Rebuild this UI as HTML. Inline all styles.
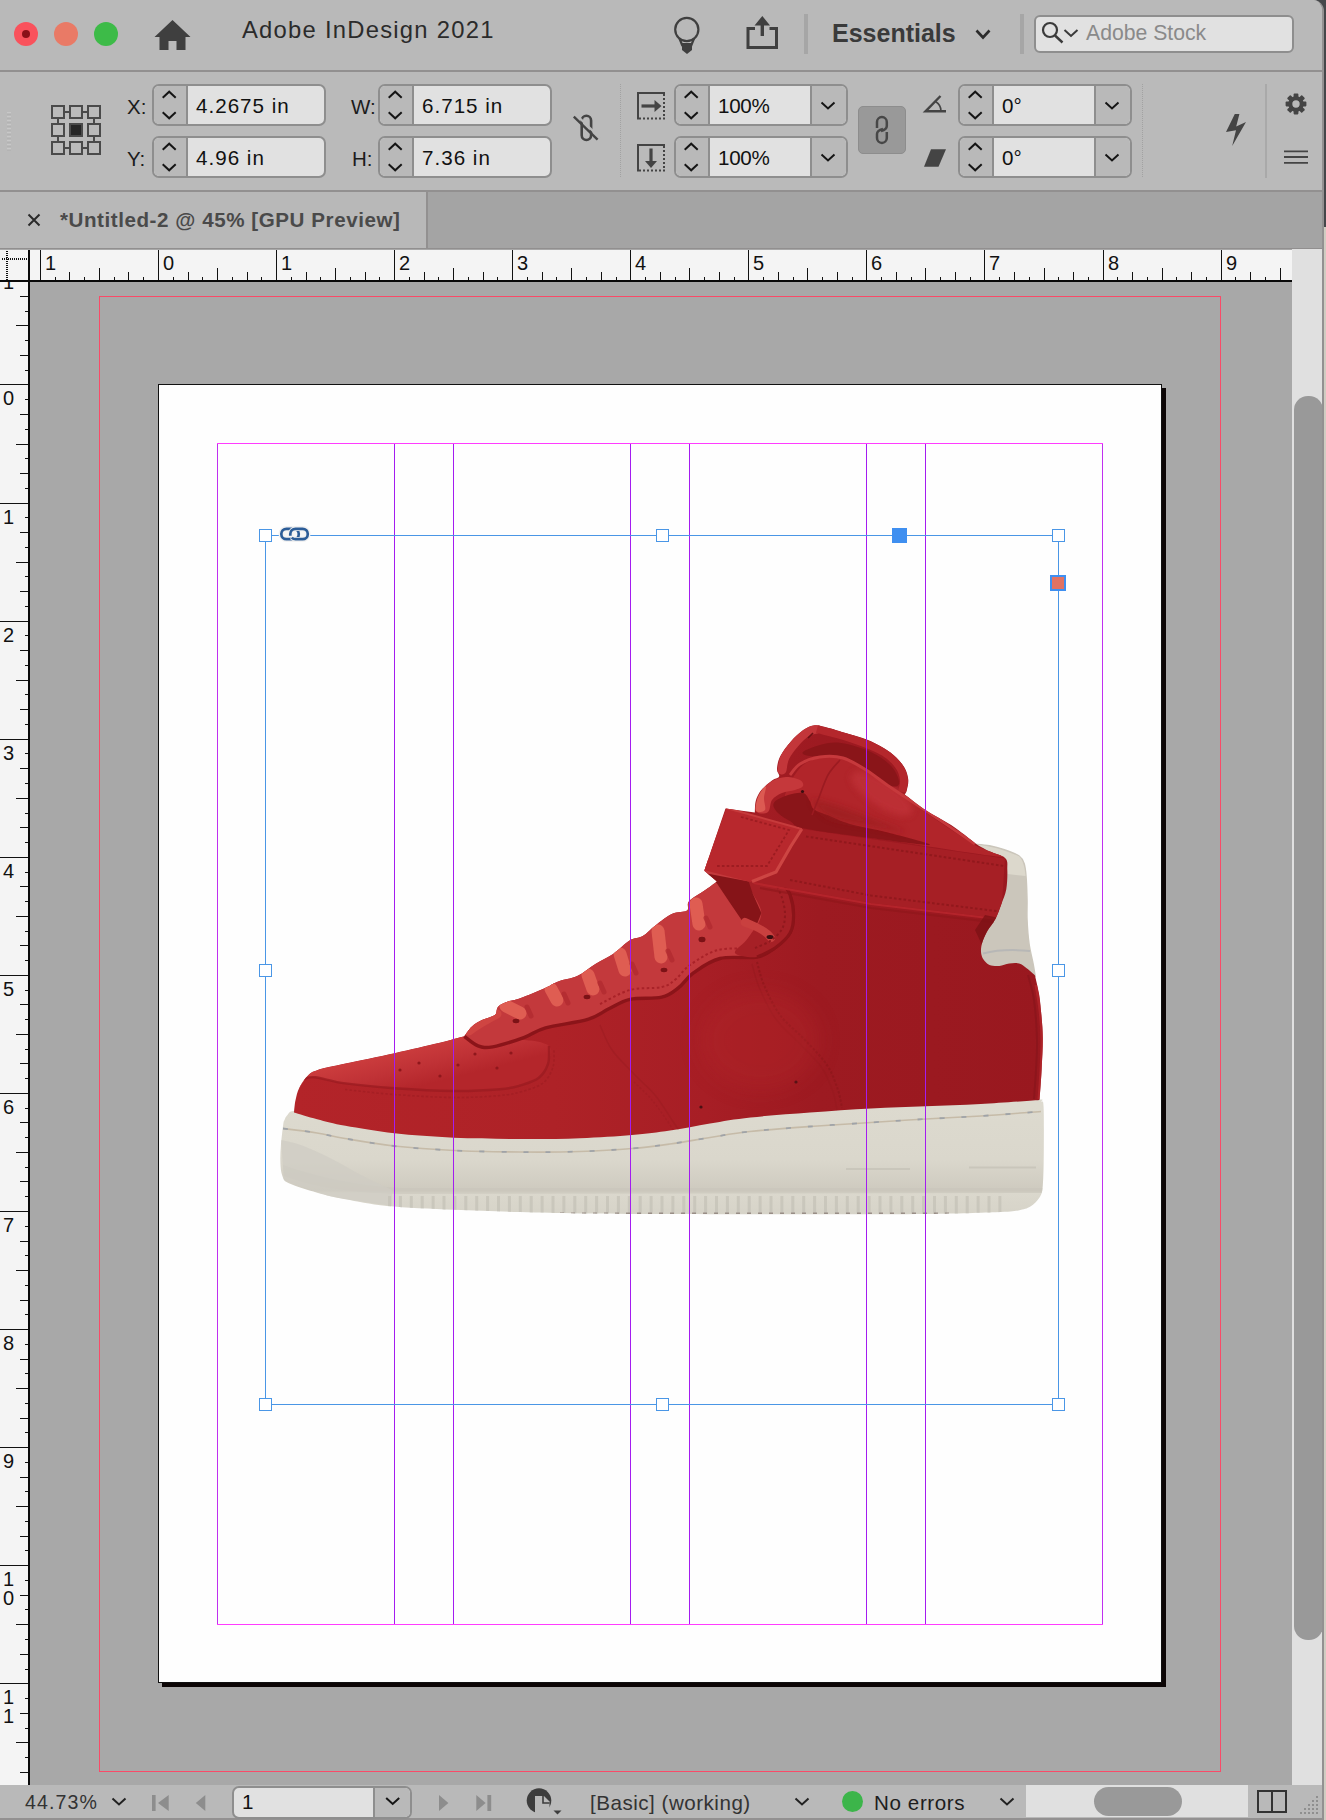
<!DOCTYPE html><html><head><meta charset="utf-8"><title>InDesign</title><style>
*{margin:0;padding:0;box-sizing:border-box}
html,body{width:1326px;height:1820px;overflow:hidden;background:#d0cdc2}
body{font-family:"Liberation Sans",sans-serif;color:#111;position:relative}
.abs{position:absolute}
#win{position:absolute;left:0;top:0;width:1324px;height:1820px;background:#bbbbbb;overflow:hidden;border-top-right-radius:11px;border-right:2px solid #939191}
#title{position:absolute;left:0;top:0;width:1323px;height:70px;background:#b9b9b9}
#ctrl{position:absolute;left:0;top:72px;width:1323px;height:118px;background:#bababa}
.hline{position:absolute;left:0;width:1323px;height:2px;background:#929090}
#tabs{position:absolute;left:0;top:192px;width:1323px;height:58px;background:#a4a4a4}
#tab1{position:absolute;left:0;top:0;width:428px;height:56px;background:#b8b8b8;border-right:2px solid #929090}
.t{position:absolute;white-space:nowrap;line-height:1}
.fld{position:absolute;height:42px;border:2px solid #8e8e8e;border-radius:7px;background:#e1e1e1;overflow:hidden}
.fld .sp{position:absolute;left:0;top:0;width:34px;height:100%;background:#b9b9b9;border-right:2px solid #8e8e8e}
.fld .dd{position:absolute;right:0;top:0;width:36px;height:100%;background:#b9b9b9;border-left:2px solid #8e8e8e}
.fld .v{position:absolute;top:10px;font-size:20.6px;color:#111;white-space:nowrap;line-height:1}
.lbl{position:absolute;font-size:20.5px;color:#1c1c1c;line-height:1;white-space:nowrap}
svg{position:absolute;overflow:visible}
</style></head><body>
<div class="abs" style="left:1300px;top:0;width:26px;height:227px;background:#45474a"></div>
<div id="win">
<div id="title">
<div class="abs" style="left:14px;top:22px;width:24px;height:24px;border-radius:50%;background:#f9525c"></div>
<div class="abs" style="left:22px;top:30px;width:8px;height:8px;border-radius:50%;background:#8a1018"></div>
<div class="abs" style="left:54px;top:22px;width:24px;height:24px;border-radius:50%;background:#e97a66"></div>
<div class="abs" style="left:94px;top:22px;width:24px;height:24px;border-radius:50%;background:#3dbb48"></div>
<svg style="left:154px;top:19px" width="38" height="32" viewBox="0 0 38 32"><path d="M18.5 1 L36.5 18 L31.5 18 L31.5 31 L22.5 31 L22.5 22 L14.5 22 L14.5 31 L5.5 31 L5.5 18 L0.5 18 Z" fill="#3f3f3f"/></svg>
<div class="t" id="apptitle" style="left:242px;top:18px;font-size:23.8px;letter-spacing:1.25px;color:#2b2b2b">Adobe InDesign 2021</div>
<svg style="left:670px;top:14px" width="34" height="42" viewBox="670 14 34 42"><circle cx="686.8" cy="29.5" r="11.6" fill="none" stroke="#3f3f3f" stroke-width="2.2"/><path d="M679.5 38.5 L682.5 46 M694 38.5 L691 46" stroke="#3f3f3f" stroke-width="2.2" fill="none"/><path d="M682 43 L692 43 L692 50 L687 54 L682 50 Z" fill="#3f3f3f"/></svg>
<svg style="left:744px;top:14px" width="38" height="38" viewBox="744 14 38 38"><path d="M755 28.5 L748 28.5 L748 47.5 L776.5 47.5 L776.5 28.5 L769.5 28.5" fill="none" stroke="#3f3f3f" stroke-width="3"/><path d="M762.3 36 L762.3 22" stroke="#3f3f3f" stroke-width="3.4" fill="none"/><path d="M754.5 25.5 L762.3 16 L770 25.5 Z" fill="#3f3f3f"/></svg>
<div class="abs" style="left:804px;top:14px;width:4px;height:40px;background:#a6a6a6"></div>
<div class="t" id="ess" style="left:832px;top:21px;font-size:25px;font-weight:bold;color:#3a3a3a">Essentials</div>
<svg style="left:974px;top:28px" width="18" height="12" viewBox="974 28 18 12"><path d="M976.5 30.5 L983 37.5 L989.5 30.5" fill="none" stroke="#2b2b2b" stroke-width="2.6"/></svg>
<div class="abs" style="left:1020px;top:14px;width:4px;height:40px;background:#a6a6a6"></div>
<div class="abs" style="left:1034px;top:14.5px;width:260px;height:38.5px;border:2px solid #8e8e8e;border-radius:6px;background:#e1e1e1"></div>
<svg style="left:1040px;top:20px" width="40" height="26" viewBox="1040 20 40 26"><circle cx="1050" cy="30" r="7" fill="none" stroke="#3a3a3a" stroke-width="2.2"/><path d="M1055 35.5 L1062.5 42.5" stroke="#3a3a3a" stroke-width="2.4" fill="none"/><path d="M1064.5 30 L1071 36 L1077.5 30" fill="none" stroke="#3a3a3a" stroke-width="2"/></svg>
<div class="t" id="stock" style="left:1086px;top:22px;font-size:21.2px;color:#8a8a8a">Adobe Stock</div>
</div>
<div class="hline" style="top:70px"></div>
<div id="ctrl"></div>
<svg style="left:0;top:0" width="20" height="200" viewBox="0 0 20 200"><rect x="7" y="112" width="4" height="1.6" fill="#c8c8c8"/><rect x="7" y="113.6" width="4" height="1" fill="#aeaeae"/><rect x="7" y="116" width="4" height="1.6" fill="#c8c8c8"/><rect x="7" y="117.6" width="4" height="1" fill="#aeaeae"/><rect x="7" y="120" width="4" height="1.6" fill="#c8c8c8"/><rect x="7" y="121.6" width="4" height="1" fill="#aeaeae"/><rect x="7" y="124" width="4" height="1.6" fill="#c8c8c8"/><rect x="7" y="125.6" width="4" height="1" fill="#aeaeae"/><rect x="7" y="128" width="4" height="1.6" fill="#c8c8c8"/><rect x="7" y="129.6" width="4" height="1" fill="#aeaeae"/><rect x="7" y="132" width="4" height="1.6" fill="#c8c8c8"/><rect x="7" y="133.6" width="4" height="1" fill="#aeaeae"/><rect x="7" y="136" width="4" height="1.6" fill="#c8c8c8"/><rect x="7" y="137.6" width="4" height="1" fill="#aeaeae"/><rect x="7" y="140" width="4" height="1.6" fill="#c8c8c8"/><rect x="7" y="141.6" width="4" height="1" fill="#aeaeae"/><rect x="7" y="144" width="4" height="1.6" fill="#c8c8c8"/><rect x="7" y="145.6" width="4" height="1" fill="#aeaeae"/><rect x="7" y="148" width="4" height="1.6" fill="#c8c8c8"/><rect x="7" y="149.6" width="4" height="1" fill="#aeaeae"/></svg>
<svg style="left:0;top:0" width="120" height="200" viewBox="0 0 120 200"><rect x="52" y="106" width="12" height="12" fill="none" stroke="#4a4a4a" stroke-width="2"/><rect x="70" y="106" width="12" height="12" fill="none" stroke="#4a4a4a" stroke-width="2"/><rect x="88" y="106" width="12" height="12" fill="none" stroke="#4a4a4a" stroke-width="2"/><rect x="52" y="124" width="12" height="12" fill="none" stroke="#4a4a4a" stroke-width="2"/><rect x="70" y="124" width="12" height="12" fill="#262626" stroke="#4a4a4a" stroke-width="2"/><rect x="88" y="124" width="12" height="12" fill="none" stroke="#4a4a4a" stroke-width="2"/><rect x="52" y="142" width="12" height="12" fill="none" stroke="#4a4a4a" stroke-width="2"/><rect x="70" y="142" width="12" height="12" fill="none" stroke="#4a4a4a" stroke-width="2"/><rect x="88" y="142" width="12" height="12" fill="none" stroke="#4a4a4a" stroke-width="2"/><path d="M65 112 L69 112" stroke="#4a4a4a" stroke-width="2"/><path d="M83 112 L87 112" stroke="#4a4a4a" stroke-width="2"/><path d="M65 148 L69 148" stroke="#4a4a4a" stroke-width="2"/><path d="M83 148 L87 148" stroke="#4a4a4a" stroke-width="2"/><path d="M58 119 L58 123" stroke="#4a4a4a" stroke-width="2"/><path d="M58 137 L58 141" stroke="#4a4a4a" stroke-width="2"/><path d="M94 119 L94 123" stroke="#4a4a4a" stroke-width="2"/><path d="M94 137 L94 141" stroke="#4a4a4a" stroke-width="2"/></svg>
<div class="lbl" id="lx" style="left:127px;top:97px">X:</div>
<div class="lbl" style="left:127px;top:149px">Y:</div>
<div class="fld" style="left:152px;top:84px;width:174px"><div class="sp"></div><svg style="left:0;top:0" width="34" height="38" viewBox="0 0 34 38"><path d="M8.7 11.7 l6.5 -6 l6.5 6" fill="none" stroke="#151515" stroke-width="2"/><path d="M8.7 26.3 l6.5 6 l6.5 -6" fill="none" stroke="#151515" stroke-width="2"/></svg><div class="v" id="vx" style="left:42px;letter-spacing:1px">4.2675 in</div></div>
<div class="fld" style="left:152px;top:136px;width:174px"><div class="sp"></div><svg style="left:0;top:0" width="34" height="38" viewBox="0 0 34 38"><path d="M8.7 11.7 l6.5 -6 l6.5 6" fill="none" stroke="#151515" stroke-width="2"/><path d="M8.7 26.3 l6.5 6 l6.5 -6" fill="none" stroke="#151515" stroke-width="2"/></svg><div class="v"  style="left:42px;letter-spacing:1px">4.96 in</div></div>
<div class="lbl" style="left:351px;top:97px">W:</div>
<div class="lbl" style="left:352px;top:149px">H:</div>
<div class="fld" style="left:378px;top:84px;width:174px"><div class="sp"></div><svg style="left:0;top:0" width="34" height="38" viewBox="0 0 34 38"><path d="M8.7 11.7 l6.5 -6 l6.5 6" fill="none" stroke="#151515" stroke-width="2"/><path d="M8.7 26.3 l6.5 6 l6.5 -6" fill="none" stroke="#151515" stroke-width="2"/></svg><div class="v" id="vw" style="left:42px;letter-spacing:1px">6.715 in</div></div>
<div class="fld" style="left:378px;top:136px;width:174px"><div class="sp"></div><svg style="left:0;top:0" width="34" height="38" viewBox="0 0 34 38"><path d="M8.7 11.7 l6.5 -6 l6.5 6" fill="none" stroke="#151515" stroke-width="2"/><path d="M8.7 26.3 l6.5 6 l6.5 -6" fill="none" stroke="#151515" stroke-width="2"/></svg><div class="v"  style="left:42px;letter-spacing:1px">7.36 in</div></div>
<svg style="left:568px;top:108px" width="36" height="40" viewBox="568 108 36 40"><path d="M581.7 120.4 A4.7 4.7 0 0 1 591.1 120.4 L591.1 135.3 A4.7 4.7 0 0 1 581.7 135.3 Z" fill="none" stroke="#444" stroke-width="2.6"/><path d="M575.9 114.5 L599.7 137.5" stroke="#bababa" stroke-width="2.4"/><path d="M573.8 116.7 L597.6 139.7" stroke="#444" stroke-width="2.4"/></svg>
<div class="abs" style="left:620px;top:84px;width:1px;height:94px;background:repeating-linear-gradient(#a2a2a2 0 1px,transparent 1px 2px)"></div>
<svg style="left:630px;top:86px" width="42" height="92" viewBox="630 86 42 92"><path d="M638 119.5 L638 93 L665 93" fill="none" stroke="#444" stroke-width="2"/><path d="M639 118.5 L665 118.5" stroke="#444" stroke-width="2" stroke-dasharray="2 2"/><path d="M664 94 L664 118" stroke="#444" stroke-width="2" stroke-dasharray="2 2"/><path d="M641.5 106 L656 106" stroke="#444" stroke-width="3.2"/><path d="M654.5 100 L661.5 106 L654.5 112 Z" fill="#444"/><path d="M638 171.5 L638 145 L665 145" fill="none" stroke="#444" stroke-width="2"/><path d="M639 170.5 L665 170.5" stroke="#444" stroke-width="2" stroke-dasharray="2 2"/><path d="M664 146 L664 170" stroke="#444" stroke-width="2" stroke-dasharray="2 2"/><path d="M651 148.5 L651 162" stroke="#444" stroke-width="3.2"/><path d="M645 161 L651 168 L657 161 Z" fill="#444"/></svg>
<div class="fld" style="left:674px;top:84px;width:174px"><div class="sp"></div><svg style="left:0;top:0" width="34" height="38" viewBox="0 0 34 38"><path d="M8.7 11.7 l6.5 -6 l6.5 6" fill="none" stroke="#151515" stroke-width="2"/><path d="M8.7 26.3 l6.5 6 l6.5 -6" fill="none" stroke="#151515" stroke-width="2"/></svg><div class="dd"></div><svg style="right:0;top:0" width="38" height="38" viewBox="0 0 38 38"><path d="M13.5 16.5 l6.5 6 l6.5 -6" fill="none" stroke="#151515" stroke-width="2"/></svg><div class="v" id="vs" style="left:42px;letter-spacing:-0.3px">100%</div></div>
<div class="fld" style="left:674px;top:136px;width:174px"><div class="sp"></div><svg style="left:0;top:0" width="34" height="38" viewBox="0 0 34 38"><path d="M8.7 11.7 l6.5 -6 l6.5 6" fill="none" stroke="#151515" stroke-width="2"/><path d="M8.7 26.3 l6.5 6 l6.5 -6" fill="none" stroke="#151515" stroke-width="2"/></svg><div class="dd"></div><svg style="right:0;top:0" width="38" height="38" viewBox="0 0 38 38"><path d="M13.5 16.5 l6.5 6 l6.5 -6" fill="none" stroke="#151515" stroke-width="2"/></svg><div class="v"  style="left:42px;letter-spacing:-0.3px">100%</div></div>
<div class="abs" style="left:858px;top:106px;width:48px;height:48px;background:#999999;border:1px solid #8d8d8d;border-radius:5px"></div>
<svg style="left:870px;top:112px" width="24" height="36" viewBox="870 112 24 36"><path d="M877 128 L877 122 A4.9 4.9 0 0 1 886.8 122 L886.8 126 Q886.8 129.5 881 131" fill="none" stroke="#474747" stroke-width="2.5"/><path d="M886.8 132 L886.8 138 A4.9 4.9 0 0 1 877 138 L877 134 Q877 130.5 883 129" fill="none" stroke="#474747" stroke-width="2.5"/></svg>
<svg style="left:920px;top:90px" width="30" height="82" viewBox="920 90 30 82"><path d="M940.5 96 L925.5 111.3 L946 111.3" fill="none" stroke="#444" stroke-width="2.4" stroke-linejoin="miter"/><path d="M935.5 101.5 Q941 105 941 111" fill="none" stroke="#444" stroke-width="1.6"/><path d="M931 149.2 L946 149.2 L938.5 166.8 L924 166.8 Z" fill="#444"/></svg>
<div class="fld" style="left:958px;top:84px;width:174px"><div class="sp"></div><svg style="left:0;top:0" width="34" height="38" viewBox="0 0 34 38"><path d="M8.7 11.7 l6.5 -6 l6.5 6" fill="none" stroke="#151515" stroke-width="2"/><path d="M8.7 26.3 l6.5 6 l6.5 -6" fill="none" stroke="#151515" stroke-width="2"/></svg><div class="dd"></div><svg style="right:0;top:0" width="38" height="38" viewBox="0 0 38 38"><path d="M13.5 16.5 l6.5 6 l6.5 -6" fill="none" stroke="#151515" stroke-width="2"/></svg><div class="v" id="vr" style="left:42px;letter-spacing:0px">0°</div></div>
<div class="fld" style="left:958px;top:136px;width:174px"><div class="sp"></div><svg style="left:0;top:0" width="34" height="38" viewBox="0 0 34 38"><path d="M8.7 11.7 l6.5 -6 l6.5 6" fill="none" stroke="#151515" stroke-width="2"/><path d="M8.7 26.3 l6.5 6 l6.5 -6" fill="none" stroke="#151515" stroke-width="2"/></svg><div class="dd"></div><svg style="right:0;top:0" width="38" height="38" viewBox="0 0 38 38"><path d="M13.5 16.5 l6.5 6 l6.5 -6" fill="none" stroke="#151515" stroke-width="2"/></svg><div class="v"  style="left:42px;letter-spacing:0px">0°</div></div>
<div class="abs" style="left:1142px;top:84px;width:1px;height:94px;background:repeating-linear-gradient(#a2a2a2 0 1px,transparent 1px 2px)"></div>
<svg style="left:1222px;top:110px" width="28" height="40" viewBox="1222 110 28 40"><path d="M1234.8 114 L1239.4 114 L1236.2 126.5 L1246 122 L1232.2 146 L1236 130.2 L1226 132 Z" fill="#444"/></svg>
<div class="abs" style="left:1265px;top:84px;width:2px;height:94px;background:#a9a9a9"></div>
<svg style="left:1282px;top:90px" width="28" height="80" viewBox="1282 90 28 80"><rect x="1293.6" y="93.6" width="4.8" height="6" rx="0.8" fill="#444" transform="rotate(0 1296 104)"/><rect x="1293.6" y="93.6" width="4.8" height="6" rx="0.8" fill="#444" transform="rotate(45 1296 104)"/><rect x="1293.6" y="93.6" width="4.8" height="6" rx="0.8" fill="#444" transform="rotate(90 1296 104)"/><rect x="1293.6" y="93.6" width="4.8" height="6" rx="0.8" fill="#444" transform="rotate(135 1296 104)"/><rect x="1293.6" y="93.6" width="4.8" height="6" rx="0.8" fill="#444" transform="rotate(180 1296 104)"/><rect x="1293.6" y="93.6" width="4.8" height="6" rx="0.8" fill="#444" transform="rotate(225 1296 104)"/><rect x="1293.6" y="93.6" width="4.8" height="6" rx="0.8" fill="#444" transform="rotate(270 1296 104)"/><rect x="1293.6" y="93.6" width="4.8" height="6" rx="0.8" fill="#444" transform="rotate(315 1296 104)"/><circle cx="1296" cy="104" r="5.7" fill="none" stroke="#444" stroke-width="4"/><path d="M1284 151.3 H1308 M1284 157 H1308 M1284 162.8 H1308" stroke="#444" stroke-width="1.8"/></svg>
<div class="hline" style="top:190px"></div>
<div id="tabs"><div id="tab1"></div></div>
<svg style="left:26px;top:212px" width="16" height="16" viewBox="26 212 16 16"><path d="M28.5 214.5 L39.5 225.5 M39.5 214.5 L28.5 225.5" stroke="#2a2a2a" stroke-width="2"/></svg>
<div class="t" id="tabt" style="left:60px;top:210px;font-size:20.6px;letter-spacing:0.55px;font-weight:bold;color:#4a4a4a">*Untitled-2 @ 45% [GPU Preview]</div>
<div class="hline" style="top:248px;background:#918f8f"></div>
<div class="abs" style="left:0;top:249px;width:1323px;height:1536px;background:#a8a8a8"></div>
<div class="abs" style="left:99px;top:296px;width:1122px;height:1476px;border:1px solid #fa4a68"></div>
<div class="abs" style="left:162px;top:388px;width:1004px;height:1299px;background:#0c0606"></div>
<div class="abs" style="left:158px;top:384px;width:1004px;height:1299px;background:#fefefe;border:1px solid #111"></div>
<svg style="left:0;top:0" width="1326" height="1820" viewBox="0 0 1326 1820">
<defs>
<linearGradient id="gr" gradientUnits="userSpaceOnUse" x1="290" y1="0" x2="1045" y2="0"><stop offset="0" stop-color="#b32429"/><stop offset="0.35" stop-color="#ae2227"/><stop offset="0.55" stop-color="#a71e25"/><stop offset="0.7" stop-color="#9d1a21"/><stop offset="1" stop-color="#99181f"/></linearGradient>
<linearGradient id="gs" gradientUnits="userSpaceOnUse" x1="0" y1="1105" x2="0" y2="1215"><stop offset="0" stop-color="#dddacf"/><stop offset="0.5" stop-color="#dad7cc"/><stop offset="0.78" stop-color="#cecabf"/><stop offset="0.8" stop-color="#dbd8cd"/><stop offset="1" stop-color="#d6d3c8"/></linearGradient>
<linearGradient id="gt" gradientUnits="userSpaceOnUse" x1="380" y1="1055" x2="389.8" y2="1093.8"><stop offset="0" stop-color="#cb3c3d"/><stop offset="0.5" stop-color="#c03236"/><stop offset="1" stop-color="#b4262b"/></linearGradient>
<filter id="b3" x="-30%" y="-30%" width="160%" height="160%"><feGaussianBlur stdDeviation="3"/></filter><filter id="b8" x="-30%" y="-30%" width="160%" height="160%"><feGaussianBlur stdDeviation="10"/></filter>
<clipPath id="cu"><path id="upath" d="M294.0 1112.5 C294.2 1110.5 294.6 1104.4 295.5 1100.3 C296.4 1096.2 297.2 1092.2 299.2 1088.1 C301.2 1084.0 304.7 1078.8 307.7 1075.8 C310.7 1072.8 310.8 1072.2 317.1 1070.2 C323.4 1068.2 332.5 1066.4 345.4 1063.6 C358.3 1060.8 378.7 1056.7 394.4 1053.2 C410.1 1049.7 428.0 1045.6 439.7 1042.8 C451.4 1040.0 460.2 1037.4 464.3 1036.3 C465.5 1034.7 468.8 1029.4 471.7 1026.7 C474.6 1024.0 478.1 1021.9 482.0 1020.0 C485.9 1018.1 492.2 1017.3 494.9 1015.1 C497.6 1012.9 495.9 1009.0 498.1 1006.7 C500.3 1004.4 504.3 1002.9 508.0 1001.5 C511.7 1000.1 513.9 1000.5 520.2 998.2 C526.5 995.9 539.3 990.5 545.6 987.7 C551.9 984.9 552.9 983.3 558.2 981.4 C563.5 979.5 570.9 979.1 577.2 976.1 C583.5 973.1 590.2 967.1 596.2 963.4 C602.2 959.7 607.5 957.8 613.1 953.9 C618.7 950.0 625.1 943.2 630.0 940.2 C634.9 937.2 638.5 938.5 642.7 936.0 C646.9 933.5 650.5 929.1 655.4 925.4 C660.3 921.7 667.0 916.3 672.3 913.8 C677.6 911.3 684.2 912.7 687.0 910.6 C689.8 908.5 686.0 904.6 689.2 901.1 C692.4 897.6 701.4 892.8 706.0 889.5 C710.6 886.2 715.2 882.8 717.0 881.4 L704.3 870.8 L725.5 808.5 L754.8 812.4 C755.0 810.5 754.8 804.5 755.8 800.8 C756.8 797.1 758.5 793.6 761.1 790.2 C763.8 786.9 768.7 783.0 771.7 780.7 C774.7 778.4 778.2 778.4 779.1 776.5 C780.0 774.6 776.8 772.4 777.0 769.1 C777.2 765.8 777.8 761.1 780.1 756.5 C782.4 751.9 786.8 746.1 790.7 741.7 C794.6 737.3 799.2 732.9 803.3 730.1 C807.3 727.4 810.8 725.6 815.0 725.2 C819.2 724.8 822.9 726.4 828.7 727.9 C834.5 729.4 843.5 732.3 849.8 734.3 C856.1 736.2 861.1 737.3 866.7 739.6 C872.3 741.9 878.7 745.0 883.6 748.0 C888.5 751.0 892.7 754.1 896.2 757.5 C899.7 760.9 902.7 764.4 904.7 768.1 C906.7 771.8 907.9 776.0 908.3 779.7 C908.6 783.4 907.4 787.7 906.8 790.2 C906.2 792.7 905.1 793.8 904.7 794.5 C908.2 797.1 918.1 805.2 925.8 810.3 C933.5 815.4 942.8 819.6 951.1 825.1 C959.4 830.6 971.5 840.4 975.6 843.5 C977.9 845.5 984.5 849.0 989.5 851.3 C994.5 853.6 1002.3 855.2 1005.3 858.2 C1008.3 861.2 1007.1 864.4 1007.3 869.6 C1007.5 874.8 1007.3 883.5 1006.3 889.3 C1005.3 895.1 1003.1 899.2 1001.3 904.2 C999.5 909.2 997.7 914.5 995.4 919.0 C993.1 923.5 989.6 927.1 987.5 930.9 C985.4 934.7 983.6 938.3 982.5 941.8 C981.4 945.3 980.8 948.7 981.0 951.7 C981.2 954.7 982.1 957.4 983.5 959.6 C984.9 961.8 986.9 963.9 989.5 965.0 C992.1 966.1 996.0 966.2 999.3 966.0 C1002.6 965.8 1005.9 963.9 1009.2 963.5 C1012.5 963.1 1016.1 962.7 1019.1 963.5 C1022.1 964.3 1024.3 966.5 1027.0 968.5 C1029.7 970.5 1033.7 974.2 1035.0 975.4 C1035.7 978.4 1037.9 987.4 1038.9 993.2 C1039.9 999.0 1040.2 1002.6 1040.9 1010.0 C1041.6 1017.4 1042.7 1028.0 1042.8 1037.7 C1042.9 1047.4 1042.2 1057.5 1041.7 1067.9 C1041.2 1078.3 1039.9 1094.7 1039.5 1100.0 C1029.7 1100.7 999.7 1103.0 980.7 1104.0 C961.7 1105.0 943.9 1105.5 925.6 1106.3 C907.3 1107.0 890.3 1107.5 871.0 1108.5 C851.7 1109.5 830.1 1111.0 810.0 1112.5 C789.9 1114.0 767.2 1115.7 750.5 1117.5 C733.8 1119.3 723.4 1121.3 710.0 1123.5 C696.6 1125.7 683.0 1128.7 670.0 1130.6 C657.0 1132.5 647.0 1133.7 632.0 1135.0 C617.0 1136.3 598.7 1137.5 580.0 1138.2 C561.3 1138.9 541.0 1139.1 520.0 1139.0 C499.0 1138.9 474.7 1138.7 453.8 1137.7 C432.9 1136.8 412.5 1135.3 394.4 1133.3 C376.3 1131.3 358.3 1128.1 345.4 1125.8 C332.5 1123.5 325.7 1121.4 317.1 1119.2 C308.5 1117.0 297.9 1113.6 294.0 1112.5Z"/></clipPath>
<clipPath id="cs"><path d="M284.5 1120.0 C285.1 1118.5 285.4 1117.0 287.0 1115.5 C288.6 1114.0 289.0 1110.7 294.0 1111.0 C299.0 1111.3 308.4 1115.3 317.0 1117.5 C325.6 1119.7 332.5 1121.8 345.4 1124.2 C358.3 1126.6 376.3 1129.7 394.4 1131.7 C412.5 1133.7 432.9 1135.0 453.8 1136.0 C474.7 1137.0 499.0 1137.3 520.0 1137.5 C541.0 1137.7 561.3 1137.6 580.0 1137.0 C598.7 1136.4 617.0 1135.2 632.0 1134.0 C647.0 1132.8 657.0 1131.4 670.0 1129.5 C683.0 1127.6 696.6 1124.7 710.0 1122.5 C723.4 1120.3 733.8 1118.4 750.5 1116.5 C767.2 1114.6 789.9 1112.7 810.0 1111.2 C830.1 1109.7 851.7 1108.5 871.0 1107.5 C890.3 1106.5 907.3 1106.1 925.6 1105.3 C943.9 1104.5 962.1 1103.8 980.7 1102.8 C999.3 1101.8 1026.9 1099.8 1037.0 1099.6 C1047.1 1099.4 1040.4 1100.3 1041.5 1101.5 C1042.6 1102.7 1043.2 1098.9 1043.6 1107.0 C1044.0 1115.1 1043.9 1136.9 1043.8 1150.0 C1043.7 1163.1 1043.5 1177.6 1042.8 1185.5 C1042.1 1193.4 1041.6 1194.1 1039.5 1197.6 C1037.4 1201.1 1033.9 1204.5 1030.4 1206.6 C1026.9 1208.7 1024.2 1209.5 1018.4 1210.4 C1012.6 1211.3 1011.2 1211.6 995.7 1212.2 C980.2 1212.8 948.2 1213.7 925.6 1214.0 C903.0 1214.3 887.6 1214.2 860.0 1214.2 C832.4 1214.2 793.3 1214.2 760.0 1214.2 C726.7 1214.2 690.0 1214.1 660.0 1214.0 C630.0 1213.9 603.3 1213.8 580.0 1213.5 C556.7 1213.2 541.0 1212.6 520.0 1212.0 C499.0 1211.4 476.0 1210.7 453.8 1209.7 C431.6 1208.7 405.0 1207.6 386.9 1205.9 C368.8 1204.2 357.0 1201.5 345.4 1199.3 C333.8 1197.1 326.5 1195.4 317.1 1192.7 C307.7 1190.0 294.7 1186.1 288.9 1183.3 C283.1 1180.5 283.7 1179.2 282.3 1175.7 C280.9 1172.2 280.6 1167.5 280.4 1162.5 C280.2 1157.5 280.4 1151.9 280.9 1145.6 C281.4 1139.3 282.6 1129.1 283.2 1124.8 C283.8 1120.5 283.9 1121.5 284.5 1120.0Z"/></clipPath>
</defs>
<path d="M284.5 1120.0 C285.1 1118.5 285.4 1117.0 287.0 1115.5 C288.6 1114.0 289.0 1110.7 294.0 1111.0 C299.0 1111.3 308.4 1115.3 317.0 1117.5 C325.6 1119.7 332.5 1121.8 345.4 1124.2 C358.3 1126.6 376.3 1129.7 394.4 1131.7 C412.5 1133.7 432.9 1135.0 453.8 1136.0 C474.7 1137.0 499.0 1137.3 520.0 1137.5 C541.0 1137.7 561.3 1137.6 580.0 1137.0 C598.7 1136.4 617.0 1135.2 632.0 1134.0 C647.0 1132.8 657.0 1131.4 670.0 1129.5 C683.0 1127.6 696.6 1124.7 710.0 1122.5 C723.4 1120.3 733.8 1118.4 750.5 1116.5 C767.2 1114.6 789.9 1112.7 810.0 1111.2 C830.1 1109.7 851.7 1108.5 871.0 1107.5 C890.3 1106.5 907.3 1106.1 925.6 1105.3 C943.9 1104.5 962.1 1103.8 980.7 1102.8 C999.3 1101.8 1026.9 1099.8 1037.0 1099.6 C1047.1 1099.4 1040.4 1100.3 1041.5 1101.5 C1042.6 1102.7 1043.2 1098.9 1043.6 1107.0 C1044.0 1115.1 1043.9 1136.9 1043.8 1150.0 C1043.7 1163.1 1043.5 1177.6 1042.8 1185.5 C1042.1 1193.4 1041.6 1194.1 1039.5 1197.6 C1037.4 1201.1 1033.9 1204.5 1030.4 1206.6 C1026.9 1208.7 1024.2 1209.5 1018.4 1210.4 C1012.6 1211.3 1011.2 1211.6 995.7 1212.2 C980.2 1212.8 948.2 1213.7 925.6 1214.0 C903.0 1214.3 887.6 1214.2 860.0 1214.2 C832.4 1214.2 793.3 1214.2 760.0 1214.2 C726.7 1214.2 690.0 1214.1 660.0 1214.0 C630.0 1213.9 603.3 1213.8 580.0 1213.5 C556.7 1213.2 541.0 1212.6 520.0 1212.0 C499.0 1211.4 476.0 1210.7 453.8 1209.7 C431.6 1208.7 405.0 1207.6 386.9 1205.9 C368.8 1204.2 357.0 1201.5 345.4 1199.3 C333.8 1197.1 326.5 1195.4 317.1 1192.7 C307.7 1190.0 294.7 1186.1 288.9 1183.3 C283.1 1180.5 283.7 1179.2 282.3 1175.7 C280.9 1172.2 280.6 1167.5 280.4 1162.5 C280.2 1157.5 280.4 1151.9 280.9 1145.6 C281.4 1139.3 282.6 1129.1 283.2 1124.8 C283.8 1120.5 283.9 1121.5 284.5 1120.0Z" fill="url(#gs)"/>
<g clip-path="url(#cs)">
<path d="M283.0 1128.5 C288.7 1129.2 306.7 1131.3 317.0 1133.0 C327.3 1134.7 332.2 1136.3 345.0 1138.5 C357.8 1140.7 375.8 1144.0 394.0 1146.0 C412.2 1148.0 433.0 1149.5 454.0 1150.5 C475.0 1151.5 499.0 1151.8 520.0 1152.0 C541.0 1152.2 561.3 1152.1 580.0 1151.5 C598.7 1150.9 617.0 1149.8 632.0 1148.5 C647.0 1147.2 657.0 1145.8 670.0 1144.0 C683.0 1142.2 696.7 1139.6 710.0 1137.5 C723.3 1135.4 733.3 1133.3 750.0 1131.5 C766.7 1129.7 789.8 1128.0 810.0 1126.5 C830.2 1125.0 851.7 1123.8 871.0 1122.5 C890.3 1121.2 907.7 1120.1 926.0 1119.0 C944.3 1117.9 961.8 1117.2 981.0 1116.0 C1000.2 1114.8 1031.0 1112.2 1041.0 1111.5" fill="none" stroke="#c6bba8" stroke-width="1.6"/>
<path d="M283.0 1128.5 C288.7 1129.2 306.7 1131.3 317.0 1133.0 C327.3 1134.7 332.2 1136.3 345.0 1138.5 C357.8 1140.7 375.8 1144.0 394.0 1146.0 C412.2 1148.0 433.0 1149.5 454.0 1150.5 C475.0 1151.5 499.0 1151.8 520.0 1152.0 C541.0 1152.2 561.3 1152.1 580.0 1151.5 C598.7 1150.9 617.0 1149.8 632.0 1148.5 C647.0 1147.2 657.0 1145.8 670.0 1144.0 C683.0 1142.2 696.7 1139.6 710.0 1137.5 C723.3 1135.4 733.3 1133.3 750.0 1131.5 C766.7 1129.7 789.8 1128.0 810.0 1126.5 C830.2 1125.0 851.7 1123.8 871.0 1122.5 C890.3 1121.2 907.7 1120.1 926.0 1119.0 C944.3 1117.9 961.8 1117.2 981.0 1116.0 C1000.2 1114.8 1031.0 1112.2 1041.0 1111.5" fill="none" stroke="#9fa3a8" stroke-width="1.8" stroke-dasharray="5 17"/>
<path d="M283 1165 C320 1178 360 1186 400 1188 L1043 1188 L1043 1193 L400 1194 C350 1193 310 1186 284 1176 Z" fill="#c9c5ba" opacity="0.55"/>
<path d="M281 1140 C300 1143 320 1152 345 1166 C365 1178 380 1184 392 1190 L392 1206 L330 1197 L284 1180 Z" fill="#cfccc3" opacity="0.7"/>
<rect x="388.0" y="1196" width="3" height="18" fill="#c4c1b7" opacity="0.75"/><rect x="398.9" y="1196" width="3" height="18" fill="#c4c1b7" opacity="0.75"/><rect x="409.8" y="1196" width="3" height="18" fill="#c4c1b7" opacity="0.75"/><rect x="420.7" y="1196" width="3" height="18" fill="#c4c1b7" opacity="0.75"/><rect x="431.6" y="1196" width="3" height="18" fill="#c4c1b7" opacity="0.75"/><rect x="442.5" y="1196" width="3" height="18" fill="#c4c1b7" opacity="0.75"/><rect x="453.4" y="1196" width="3" height="18" fill="#c4c1b7" opacity="0.75"/><rect x="464.3" y="1196" width="3" height="18" fill="#c4c1b7" opacity="0.75"/><rect x="475.2" y="1196" width="3" height="18" fill="#c4c1b7" opacity="0.75"/><rect x="486.1" y="1196" width="3" height="18" fill="#c4c1b7" opacity="0.75"/><rect x="497.0" y="1196" width="3" height="18" fill="#c4c1b7" opacity="0.75"/><rect x="507.9" y="1196" width="3" height="18" fill="#c4c1b7" opacity="0.75"/><rect x="518.8" y="1196" width="3" height="18" fill="#c4c1b7" opacity="0.75"/><rect x="529.7" y="1196" width="3" height="18" fill="#c4c1b7" opacity="0.75"/><rect x="540.6" y="1196" width="3" height="18" fill="#c4c1b7" opacity="0.75"/><rect x="551.5" y="1196" width="3" height="18" fill="#c4c1b7" opacity="0.75"/><rect x="562.4" y="1196" width="3" height="18" fill="#c4c1b7" opacity="0.75"/><rect x="573.3" y="1196" width="3" height="18" fill="#c4c1b7" opacity="0.75"/><rect x="584.2" y="1196" width="3" height="18" fill="#c4c1b7" opacity="0.75"/><rect x="595.1" y="1196" width="3" height="18" fill="#c4c1b7" opacity="0.75"/><rect x="606.0" y="1196" width="3" height="18" fill="#c4c1b7" opacity="0.75"/><rect x="616.9" y="1196" width="3" height="18" fill="#c4c1b7" opacity="0.75"/><rect x="627.8" y="1196" width="3" height="18" fill="#c4c1b7" opacity="0.75"/><rect x="638.7" y="1196" width="3" height="18" fill="#c4c1b7" opacity="0.75"/><rect x="649.6" y="1196" width="3" height="18" fill="#c4c1b7" opacity="0.75"/><rect x="660.5" y="1196" width="3" height="18" fill="#c4c1b7" opacity="0.75"/><rect x="671.4" y="1196" width="3" height="18" fill="#c4c1b7" opacity="0.75"/><rect x="682.3" y="1196" width="3" height="18" fill="#c4c1b7" opacity="0.75"/><rect x="693.2" y="1196" width="3" height="18" fill="#c4c1b7" opacity="0.75"/><rect x="704.1" y="1196" width="3" height="18" fill="#c4c1b7" opacity="0.75"/><rect x="715.0" y="1196" width="3" height="18" fill="#c4c1b7" opacity="0.75"/><rect x="725.9" y="1196" width="3" height="18" fill="#c4c1b7" opacity="0.75"/><rect x="736.8" y="1196" width="3" height="18" fill="#c4c1b7" opacity="0.75"/><rect x="747.7" y="1196" width="3" height="18" fill="#c4c1b7" opacity="0.75"/><rect x="758.6" y="1196" width="3" height="18" fill="#c4c1b7" opacity="0.75"/><rect x="769.5" y="1196" width="3" height="18" fill="#c4c1b7" opacity="0.75"/><rect x="780.4" y="1196" width="3" height="18" fill="#c4c1b7" opacity="0.75"/><rect x="791.3" y="1196" width="3" height="18" fill="#c4c1b7" opacity="0.75"/><rect x="802.2" y="1196" width="3" height="18" fill="#c4c1b7" opacity="0.75"/><rect x="813.1" y="1196" width="3" height="18" fill="#c4c1b7" opacity="0.75"/><rect x="824.0" y="1196" width="3" height="18" fill="#c4c1b7" opacity="0.75"/><rect x="834.9" y="1196" width="3" height="18" fill="#c4c1b7" opacity="0.75"/><rect x="845.8" y="1196" width="3" height="18" fill="#c4c1b7" opacity="0.75"/><rect x="856.7" y="1196" width="3" height="18" fill="#c4c1b7" opacity="0.75"/><rect x="867.6" y="1196" width="3" height="18" fill="#c4c1b7" opacity="0.75"/><rect x="878.5" y="1196" width="3" height="18" fill="#c4c1b7" opacity="0.75"/><rect x="889.4" y="1196" width="3" height="18" fill="#c4c1b7" opacity="0.75"/><rect x="900.3" y="1196" width="3" height="18" fill="#c4c1b7" opacity="0.75"/><rect x="911.2" y="1196" width="3" height="18" fill="#c4c1b7" opacity="0.75"/><rect x="922.1" y="1196" width="3" height="18" fill="#c4c1b7" opacity="0.75"/><rect x="933.0" y="1196" width="3" height="18" fill="#c4c1b7" opacity="0.75"/><rect x="943.9" y="1196" width="3" height="18" fill="#c4c1b7" opacity="0.75"/><rect x="954.8" y="1196" width="3" height="18" fill="#c4c1b7" opacity="0.75"/><rect x="965.7" y="1196" width="3" height="18" fill="#c4c1b7" opacity="0.75"/><rect x="976.6" y="1196" width="3" height="18" fill="#c4c1b7" opacity="0.75"/><rect x="987.5" y="1196" width="3" height="18" fill="#c4c1b7" opacity="0.75"/><rect x="998.4" y="1196" width="3" height="18" fill="#c4c1b7" opacity="0.75"/>
<path d="M560 1213.3 H950" stroke="#8d7f78" stroke-width="1.4" stroke-dasharray="4 7" opacity="0.8"/>
<path d="M846 1169 H910 M969 1167.5 H1036" stroke="#c9c6bb" stroke-width="2"/>
</g>
<path d="M975.6 844.3 C977.9 844.5 984.7 844.9 989.5 845.8 C994.3 846.7 999.4 848.1 1004.3 849.8 C1009.2 851.5 1015.8 853.9 1019.1 856.2 C1022.4 858.5 1022.9 860.1 1024.1 863.6 C1025.3 867.1 1025.6 871.6 1026.1 877.5 C1026.6 883.4 1026.8 892.3 1027.0 899.2 C1027.2 906.1 1026.7 911.6 1027.0 919.0 C1027.3 926.4 1028.0 936.3 1029.0 943.7 C1030.0 951.1 1032.0 958.2 1033.0 963.5 C1034.0 968.8 1034.7 973.4 1035.0 975.4 C1033.7 974.2 1029.7 970.5 1027.0 968.5 C1024.3 966.5 1022.1 964.3 1019.1 963.5 C1016.1 962.7 1012.5 963.1 1009.2 963.5 C1005.9 963.9 1002.6 965.8 999.3 966.0 C996.0 966.2 992.1 966.1 989.5 965.0 C986.9 963.9 984.9 961.8 983.5 959.6 C982.1 957.4 981.2 954.7 981.0 951.7 C980.8 948.7 981.4 945.3 982.5 941.8 C983.6 938.3 985.4 934.7 987.5 930.9 C989.6 927.1 993.1 923.5 995.4 919.0 C997.7 914.5 999.5 909.2 1001.3 904.2 C1003.1 899.2 1005.3 895.1 1006.3 889.3 C1007.3 883.5 1007.5 874.8 1007.3 869.6 C1007.1 864.4 1008.3 861.2 1005.3 858.2 C1002.3 855.2 994.5 853.6 989.5 851.3 C984.5 849.0 977.9 845.5 975.6 844.3Z" fill="#cbc6bb" stroke="#cbc6bb" stroke-width="1.5"/>
<path d="M975.6 844.3 C990 846 1005 850 1019 856.2 C1023 860 1025 868 1025.5 876 L1007.5 874 L1005.3 858.2 L989.5 851.3 Z" fill="#dcd8cc"/>
<path d="M983 953.5 C995 950.5 1010 949 1030 951" fill="none" stroke="#b7b7b6" stroke-width="2"/>
<path d="M294.0 1112.5 C294.2 1110.5 294.6 1104.4 295.5 1100.3 C296.4 1096.2 297.2 1092.2 299.2 1088.1 C301.2 1084.0 304.7 1078.8 307.7 1075.8 C310.7 1072.8 310.8 1072.2 317.1 1070.2 C323.4 1068.2 332.5 1066.4 345.4 1063.6 C358.3 1060.8 378.7 1056.7 394.4 1053.2 C410.1 1049.7 428.0 1045.6 439.7 1042.8 C451.4 1040.0 460.2 1037.4 464.3 1036.3 C465.5 1034.7 468.8 1029.4 471.7 1026.7 C474.6 1024.0 478.1 1021.9 482.0 1020.0 C485.9 1018.1 492.2 1017.3 494.9 1015.1 C497.6 1012.9 495.9 1009.0 498.1 1006.7 C500.3 1004.4 504.3 1002.9 508.0 1001.5 C511.7 1000.1 513.9 1000.5 520.2 998.2 C526.5 995.9 539.3 990.5 545.6 987.7 C551.9 984.9 552.9 983.3 558.2 981.4 C563.5 979.5 570.9 979.1 577.2 976.1 C583.5 973.1 590.2 967.1 596.2 963.4 C602.2 959.7 607.5 957.8 613.1 953.9 C618.7 950.0 625.1 943.2 630.0 940.2 C634.9 937.2 638.5 938.5 642.7 936.0 C646.9 933.5 650.5 929.1 655.4 925.4 C660.3 921.7 667.0 916.3 672.3 913.8 C677.6 911.3 684.2 912.7 687.0 910.6 C689.8 908.5 686.0 904.6 689.2 901.1 C692.4 897.6 701.4 892.8 706.0 889.5 C710.6 886.2 715.2 882.8 717.0 881.4 L704.3 870.8 L725.5 808.5 L754.8 812.4 C755.0 810.5 754.8 804.5 755.8 800.8 C756.8 797.1 758.5 793.6 761.1 790.2 C763.8 786.9 768.7 783.0 771.7 780.7 C774.7 778.4 778.2 778.4 779.1 776.5 C780.0 774.6 776.8 772.4 777.0 769.1 C777.2 765.8 777.8 761.1 780.1 756.5 C782.4 751.9 786.8 746.1 790.7 741.7 C794.6 737.3 799.2 732.9 803.3 730.1 C807.3 727.4 810.8 725.6 815.0 725.2 C819.2 724.8 822.9 726.4 828.7 727.9 C834.5 729.4 843.5 732.3 849.8 734.3 C856.1 736.2 861.1 737.3 866.7 739.6 C872.3 741.9 878.7 745.0 883.6 748.0 C888.5 751.0 892.7 754.1 896.2 757.5 C899.7 760.9 902.7 764.4 904.7 768.1 C906.7 771.8 907.9 776.0 908.3 779.7 C908.6 783.4 907.4 787.7 906.8 790.2 C906.2 792.7 905.1 793.8 904.7 794.5 C908.2 797.1 918.1 805.2 925.8 810.3 C933.5 815.4 942.8 819.6 951.1 825.1 C959.4 830.6 971.5 840.4 975.6 843.5 C977.9 845.5 984.5 849.0 989.5 851.3 C994.5 853.6 1002.3 855.2 1005.3 858.2 C1008.3 861.2 1007.1 864.4 1007.3 869.6 C1007.5 874.8 1007.3 883.5 1006.3 889.3 C1005.3 895.1 1003.1 899.2 1001.3 904.2 C999.5 909.2 997.7 914.5 995.4 919.0 C993.1 923.5 989.6 927.1 987.5 930.9 C985.4 934.7 983.6 938.3 982.5 941.8 C981.4 945.3 980.8 948.7 981.0 951.7 C981.2 954.7 982.1 957.4 983.5 959.6 C984.9 961.8 986.9 963.9 989.5 965.0 C992.1 966.1 996.0 966.2 999.3 966.0 C1002.6 965.8 1005.9 963.9 1009.2 963.5 C1012.5 963.1 1016.1 962.7 1019.1 963.5 C1022.1 964.3 1024.3 966.5 1027.0 968.5 C1029.7 970.5 1033.7 974.2 1035.0 975.4 C1035.7 978.4 1037.9 987.4 1038.9 993.2 C1039.9 999.0 1040.2 1002.6 1040.9 1010.0 C1041.6 1017.4 1042.7 1028.0 1042.8 1037.7 C1042.9 1047.4 1042.2 1057.5 1041.7 1067.9 C1041.2 1078.3 1039.9 1094.7 1039.5 1100.0 C1029.7 1100.7 999.7 1103.0 980.7 1104.0 C961.7 1105.0 943.9 1105.5 925.6 1106.3 C907.3 1107.0 890.3 1107.5 871.0 1108.5 C851.7 1109.5 830.1 1111.0 810.0 1112.5 C789.9 1114.0 767.2 1115.7 750.5 1117.5 C733.8 1119.3 723.4 1121.3 710.0 1123.5 C696.6 1125.7 683.0 1128.7 670.0 1130.6 C657.0 1132.5 647.0 1133.7 632.0 1135.0 C617.0 1136.3 598.7 1137.5 580.0 1138.2 C561.3 1138.9 541.0 1139.1 520.0 1139.0 C499.0 1138.9 474.7 1138.7 453.8 1137.7 C432.9 1136.8 412.5 1135.3 394.4 1133.3 C376.3 1131.3 358.3 1128.1 345.4 1125.8 C332.5 1123.5 325.7 1121.4 317.1 1119.2 C308.5 1117.0 297.9 1113.6 294.0 1112.5Z" fill="url(#gr)"/>
<g clip-path="url(#cu)">
<path d="M299.0 1088.0 C299.6 1087.5 304.7 1078.8 307.7 1075.8 C310.7 1072.8 310.8 1072.2 317.1 1070.2 C323.4 1068.2 332.5 1066.4 345.4 1063.6 C358.3 1060.8 378.7 1056.7 394.4 1053.2 C410.1 1049.7 428.0 1045.6 439.7 1042.8 C451.4 1040.0 457.6 1035.8 464.3 1036.3 C471.0 1036.8 470.7 1045.4 480.0 1046.0 C489.3 1046.6 508.5 1040.0 520.0 1040.0 C531.5 1040.0 544.3 1042.0 549.0 1046.0 C553.7 1050.0 549.8 1058.7 548.0 1064.0 C546.2 1069.3 543.2 1074.4 538.5 1078.0 C533.8 1081.6 526.4 1083.6 520.0 1085.5 C513.6 1087.4 511.0 1088.3 500.0 1089.2 C489.0 1090.1 471.4 1091.2 453.8 1091.0 C436.2 1090.8 412.5 1089.5 394.4 1088.2 C376.3 1086.9 358.6 1085.2 345.4 1083.4 C332.2 1081.6 322.1 1077.9 315.2 1077.2 C308.3 1076.5 306.7 1077.2 304.0 1079.0 C301.3 1080.8 298.4 1088.5 299.0 1088.0Z" fill="url(#gt)"/>
<path d="M304.0 1079.0 C305.9 1078.7 308.3 1076.5 315.2 1077.2 C322.1 1077.9 332.2 1081.6 345.4 1083.4 C358.6 1085.2 376.3 1086.9 394.4 1088.2 C412.5 1089.5 436.2 1090.8 453.8 1091.0 C471.4 1091.2 489.0 1090.1 500.0 1089.2 C511.0 1088.3 513.6 1087.4 520.0 1085.5 C526.4 1083.6 533.8 1081.6 538.5 1078.0 C543.2 1074.4 546.2 1069.3 548.0 1064.0 C549.8 1058.7 548.8 1049.0 549.0 1046.0" fill="none" stroke="#9a1b20" stroke-width="2.4" opacity="0.75"/>
<path d="M345.0 1089.5 C353.2 1090.3 375.8 1093.2 394.0 1094.5 C412.2 1095.8 436.3 1097.3 454.0 1097.5 C471.7 1097.7 488.7 1096.5 500.0 1095.5 C511.3 1094.5 514.8 1093.6 522.0 1091.5 C529.2 1089.4 537.8 1087.1 543.0 1083.0 C548.2 1078.9 551.2 1072.5 553.0 1067.0 C554.8 1061.5 553.8 1052.8 554.0 1050.0" fill="none" stroke="#9a1b20" stroke-width="1.6" opacity="0.55" stroke-dasharray="2.5 2"/>
<circle cx="400" cy="1070" r="1.6" fill="#8f171c"/>
<circle cx="419" cy="1063" r="1.6" fill="#8f171c"/>
<circle cx="440" cy="1076" r="1.6" fill="#8f171c"/>
<circle cx="458" cy="1065" r="1.6" fill="#8f171c"/>
<circle cx="475" cy="1054" r="1.6" fill="#8f171c"/>
<circle cx="497" cy="1068" r="1.6" fill="#8f171c"/>
<circle cx="511" cy="1053" r="1.6" fill="#8f171c"/>
<circle cx="701" cy="1107" r="1.6" fill="#4a1013"/>
<circle cx="796" cy="1082" r="1.6" fill="#4a1013"/>
<path d="M464.3 1036.3 C466.6 1037.9 473.2 1044.0 478.0 1045.8 C482.8 1047.5 485.1 1048.2 492.8 1046.8 C500.6 1045.4 515.7 1040.5 524.5 1037.3 C533.3 1034.1 535.1 1030.8 545.6 1027.8 C556.1 1024.8 577.2 1022.6 587.8 1019.4 C598.3 1016.2 601.9 1012.1 608.9 1008.8 C615.9 1005.4 621.2 1001.2 630.0 999.3 C638.8 997.4 653.6 999.1 661.7 997.2 C669.8 995.3 673.3 991.8 678.6 987.7 C683.9 983.7 686.5 977.8 693.4 972.9 C700.3 968.0 709.4 961.1 720.0 958.5 C730.6 955.9 747.8 958.8 757.0 957.0 C766.2 955.2 769.5 952.0 775.0 948.0 C780.5 944.0 786.9 938.5 790.0 933.0 C793.1 927.5 793.5 921.3 793.5 915.0 C793.5 908.7 792.2 900.8 790.0 895.0 C787.8 889.2 781.7 882.5 780.0 880.0 L760 860 L700 860 L640 900 L560 950 L480 990 L440 1030 Z" fill="#c3393c"/>
<path d="M464.3 1036.3 C466.6 1037.9 473.2 1044.0 478.0 1045.8 C482.8 1047.5 485.1 1048.2 492.8 1046.8 C500.6 1045.4 515.7 1040.5 524.5 1037.3 C533.3 1034.1 535.1 1030.8 545.6 1027.8 C556.1 1024.8 577.2 1022.6 587.8 1019.4 C598.3 1016.2 601.9 1012.1 608.9 1008.8 C615.9 1005.4 621.2 1001.2 630.0 999.3 C638.8 997.4 653.6 999.1 661.7 997.2 C669.8 995.3 673.3 991.8 678.6 987.7 C683.9 983.7 686.5 977.8 693.4 972.9 C700.3 968.0 709.4 961.1 720.0 958.5 C730.6 955.9 747.8 958.8 757.0 957.0 C766.2 955.2 769.5 952.0 775.0 948.0 C780.5 944.0 786.9 938.5 790.0 933.0 C793.1 927.5 793.5 921.3 793.5 915.0 C793.5 908.7 792.2 900.8 790.0 895.0 C787.8 889.2 781.7 882.5 780.0 880.0" fill="none" stroke="#8b1419" stroke-width="3.4"/>
<path d="M600.0 1004.0 C605.0 1001.7 619.7 992.8 630.0 990.0 C640.3 987.2 654.3 988.8 662.0 987.0 C669.7 985.2 671.3 982.7 676.0 979.0 C680.7 975.3 683.0 969.8 690.0 965.0 C697.0 960.2 707.2 952.8 718.0 950.0 C728.8 947.2 746.3 949.5 755.0 948.0 C763.7 946.5 765.5 944.2 770.0 941.0 C774.5 937.8 779.5 933.5 782.0 929.0 C784.5 924.5 785.0 919.2 785.0 914.0 C785.0 908.8 782.5 900.7 782.0 898.0" fill="none" stroke="#a92228" stroke-width="2" stroke-dasharray="2.5 2.5"/>
<path d="M469 1031 C478 1024 488 1019 497 1014" fill="none" stroke="#cf4542" stroke-width="9" stroke-linecap="round"/>
<path d="M506 1006 L520 1013" fill="none" stroke="#df5d52" stroke-width="13" stroke-linecap="round"/>
<path d="M527 1007 L531 1016" fill="none" stroke="#b12a2f" stroke-width="5" stroke-linecap="round" opacity="0.8"/>
<path d="M551 989 L557 1000" fill="none" stroke="#df5d52" stroke-width="13" stroke-linecap="round"/>
<path d="M564 994 L568 1003" fill="none" stroke="#b12a2f" stroke-width="5" stroke-linecap="round" opacity="0.8"/>
<path d="M588 975 L593 989" fill="none" stroke="#df5d52" stroke-width="13" stroke-linecap="round"/>
<path d="M600 983 L604 992" fill="none" stroke="#b12a2f" stroke-width="5" stroke-linecap="round" opacity="0.8"/>
<path d="M620 954 L625 970" fill="none" stroke="#df5d52" stroke-width="13" stroke-linecap="round"/>
<path d="M632 964 L636 973" fill="none" stroke="#b12a2f" stroke-width="5" stroke-linecap="round" opacity="0.8"/>
<path d="M658 931 L661 957" fill="none" stroke="#df5d52" stroke-width="13" stroke-linecap="round"/>
<path d="M668 951 L672 960" fill="none" stroke="#b12a2f" stroke-width="5" stroke-linecap="round" opacity="0.8"/>
<path d="M696 904 L699 924" fill="none" stroke="#df5d52" stroke-width="13" stroke-linecap="round"/>
<path d="M706 918 L710 927" fill="none" stroke="#b12a2f" stroke-width="5" stroke-linecap="round" opacity="0.8"/>
<ellipse cx="516" cy="1021" rx="3.4" ry="2.2" fill="#7c1216"/>
<ellipse cx="587" cy="997" rx="3.4" ry="2.2" fill="#7c1216"/>
<ellipse cx="664" cy="970" rx="3.4" ry="2.2" fill="#7c1216"/>
<ellipse cx="702" cy="940" rx="3.4" ry="2.2" fill="#7c1216"/>
<ellipse cx="702" cy="939" rx="3.4" ry="2.2" fill="#7c1216"/>
<path d="M745 922 C752 925 768 930 772 938" fill="none" stroke="#c9403f" stroke-width="9" stroke-linecap="round"/>
<ellipse cx="770" cy="936.5" rx="3.5" ry="2" fill="#3a0e10"/>
<path d="M748.7 881.4 C751.8 875.9 773.1 877.7 780.0 880.0 C786.9 882.3 787.8 889.2 790.0 895.0 C792.2 900.8 793.5 908.7 793.5 915.0 C793.5 921.3 793.1 927.5 790.0 933.0 C786.9 938.5 780.5 944.0 775.0 948.0 C769.5 952.0 763.7 956.2 757.0 957.0 C750.3 957.8 736.5 956.2 735.0 953.0 C733.5 949.8 743.6 944.7 748.0 938.0 C752.4 931.3 761.3 922.4 761.4 913.0 C761.5 903.6 745.6 886.9 748.7 881.4Z" fill="#a62026"/>
<path d="M704.3 872.9 L748.7 881.4 L752.9 894 L761.4 913 L757 924 L744 923.5 L729.7 902.5 L717 883.5 Z" fill="#861418"/>
<path d="M745 922 C752 925 766 930 771 938" fill="none" stroke="#c9403f" stroke-width="8" stroke-linecap="round"/>
<ellipse cx="770" cy="937" rx="3.5" ry="2" fill="#3a0e10"/>
<path d="M757.0 957.0 C760.0 955.5 769.5 952.0 775.0 948.0 C780.5 944.0 786.9 938.5 790.0 933.0 C793.1 927.5 793.5 921.3 793.5 915.0 C793.5 908.7 791.9 900.5 790.0 895.0 C788.1 889.5 783.3 884.2 782.0 882.0" fill="none" stroke="#8b1419" stroke-width="3"/>
<path d="M755.0 948.0 C757.5 946.8 765.5 944.2 770.0 941.0 C774.5 937.8 779.5 933.5 782.0 929.0 C784.5 924.5 785.0 919.2 785.0 914.0 C785.0 908.8 783.5 903.0 782.0 898.0 C780.5 893.0 777.0 886.3 776.0 884.0" fill="none" stroke="#8f181d" stroke-width="2" stroke-dasharray="2.5 2.5"/>
<path d="M757.0 962.0 C758.2 965.8 760.2 976.2 764.0 985.0 C767.8 993.8 773.2 1005.8 780.0 1015.0 C786.8 1024.2 797.2 1031.7 805.0 1040.0 C812.8 1048.3 821.5 1056.7 827.0 1065.0 C832.5 1073.3 835.5 1082.8 838.0 1090.0 C840.5 1097.2 841.3 1105.0 842.0 1108.0" fill="none" stroke="#8f171c" stroke-width="2" stroke-dasharray="2.4 1.8" opacity="0.85"/>
<path d="M752.0 964.0 C753.2 967.8 755.2 978.0 759.0 987.0 C762.8 996.0 768.2 1008.5 775.0 1018.0 C781.8 1027.5 792.2 1035.7 800.0 1044.0 C807.8 1052.3 816.5 1060.0 822.0 1068.0 C827.5 1076.0 830.5 1085.0 833.0 1092.0 C835.5 1099.0 836.3 1107.0 837.0 1110.0" fill="none" stroke="#951a1f" stroke-width="1.4" opacity="0.55"/>
<path d="M600.0 1025.0 C602.0 1029.2 606.2 1041.7 612.0 1050.0 C617.8 1058.3 627.8 1067.5 635.0 1075.0 C642.2 1082.5 648.8 1087.5 655.0 1095.0 C661.2 1102.5 667.8 1113.8 672.0 1120.0 C676.2 1126.2 678.7 1130.0 680.0 1132.0" fill="none" stroke="#9c1c22" stroke-width="1.4" opacity="0.6"/>
<path d="M634.0 1082.0 C637.0 1085.0 646.3 1093.3 652.0 1100.0 C657.7 1106.7 664.2 1116.5 668.0 1122.0 C671.8 1127.5 673.8 1131.2 675.0 1133.0" fill="none" stroke="#9c1c22" stroke-width="1.4" opacity="0.5" stroke-dasharray="2 2"/>
<ellipse cx="760" cy="1040" rx="60" ry="50" fill="#b4252a" opacity="0.35" filter="url(#b8)"/>
<path d="M801.8 829 L1005 858.5 L1001 918.5 L871 903 L753.5 882 L774.6 872.9 Z" fill="#a61f25"/>
<path d="M753.5 883 L871 904 L1001 919.5" fill="none" stroke="#b7262c" stroke-width="2.2" opacity="0.9"/>
<path d="M760 888 L871 908 L1000 923" fill="none" stroke="#8c1519" stroke-width="2" opacity="0.55"/>
<path d="M806 836.5 L1004 866" fill="none" stroke="#8f171c" stroke-width="2" stroke-dasharray="2.6 2.2" opacity="0.9"/>
<path d="M790 880 L871 895.5 L1000 911.5" fill="none" stroke="#8f171c" stroke-width="2" stroke-dasharray="2.6 2.2" opacity="0.9"/>
<path d="M726.4 808 L801.8 829 L774.6 872.9 L750.5 882 L703.7 869.9 Z" fill="#b8282d"/>
<path d="M801.8 829 L791 846 L776 872 L752 881.5" fill="none" stroke="#cd4543" stroke-width="3.2" stroke-linejoin="round"/>
<path d="M741 817 L789 830 L767 866 L716 866" fill="none" stroke="#96191e" stroke-width="1.8" stroke-dasharray="2.6 2.2" opacity="0.8"/>
<path d="M726.4 808 L801.8 829" fill="none" stroke="#c63b3c" stroke-width="2"/>
<path d="M803.0 765.0 C810.5 758.7 821.3 757.5 830.0 757.0 C838.7 756.5 846.7 758.2 855.0 762.0 C863.3 765.8 868.3 771.7 880.0 780.0 C891.7 788.3 909.2 801.2 925.0 812.0 C940.8 822.8 962.0 837.5 975.0 845.0 C988.0 852.5 1015.5 857.5 1003.0 857.0 C990.5 856.5 932.8 847.0 900.0 842.0 C867.2 837.0 824.3 831.5 806.0 827.0 C787.7 822.5 793.5 820.3 790.0 815.0 C786.5 809.7 782.8 803.3 785.0 795.0 C787.2 786.7 795.5 771.3 803.0 765.0Z" fill="#b1252a"/>
<ellipse cx="880" cy="796" rx="36" ry="13" fill="#c03237" opacity="0.8" filter="url(#b3)" transform="rotate(33 885 798)"/>
<path d="M773.8 802.9 C775.5 799.9 783.1 796.6 788.0 795.0 C792.9 793.4 799.7 792.0 803.3 793.0 C806.9 794.0 807.9 798.1 809.7 800.8 C811.5 803.5 810.7 806.7 813.9 809.2 C817.1 811.7 822.7 813.1 828.7 815.6 C834.7 818.1 839.9 821.2 849.8 824.0 C859.6 826.8 874.4 829.0 887.8 832.5 C901.2 836.0 933.5 844.2 930.0 845.0 C926.5 845.8 887.6 840.2 866.7 837.5 C845.8 834.8 817.1 831.2 804.4 828.5 C791.7 825.8 795.1 824.1 790.7 821.5 C786.3 818.9 780.8 816.1 778.0 813.0 C775.2 809.9 772.1 805.9 773.8 802.9Z" fill="#8a1519"/>
<path d="M812.0 800.0 C812.8 797.8 825.3 802.0 835.0 805.0 C844.7 808.0 858.3 813.5 870.0 818.0 C881.7 822.5 905.0 830.7 905.0 832.0 C905.0 833.3 882.5 828.3 870.0 826.0 C857.5 823.7 839.7 822.3 830.0 818.0 C820.3 813.7 811.2 802.2 812.0 800.0Z" fill="#951a1f" opacity="0.6" filter="url(#b3)"/>
<path d="M803.0 752.0 C804.7 750.2 813.7 746.5 820.0 745.0 C826.3 743.5 832.5 741.8 841.0 743.0 C849.5 744.2 862.5 748.0 871.0 752.0 C879.5 756.0 887.3 761.7 892.0 767.0 C896.7 772.3 899.7 781.0 899.0 784.0 C898.3 787.0 893.3 787.5 888.0 785.0 C882.7 782.5 874.8 773.7 867.0 769.0 C859.2 764.3 850.5 759.2 841.0 757.0 C831.5 754.8 816.3 756.8 810.0 756.0 C803.7 755.2 801.3 753.8 803.0 752.0Z" fill="#8a1519"/>
<path d="M782.0 770.0 C782.5 767.8 782.8 761.5 785.0 757.0 C787.2 752.5 791.3 747.2 795.0 743.0 C798.7 738.8 803.3 734.3 807.0 732.0 C810.7 729.7 815.3 729.5 817.0 729.0" fill="none" stroke="#c3363a" stroke-width="9" stroke-linecap="round"/>
<path d="M817.0 729.0 C822.5 730.5 838.8 734.2 850.0 738.0 C861.2 741.8 875.8 747.3 884.0 752.0 C892.2 756.7 895.7 761.3 899.0 766.0 C902.3 770.7 903.5 775.7 904.0 780.0 C904.5 784.3 902.3 790.0 902.0 792.0" fill="none" stroke="#b4272c" stroke-width="8"/>
<path d="M808 738 l5 -5" stroke="#6e1014" stroke-width="1.6"/>
<path d="M790.0 775.0 C791.7 773.2 795.0 767.0 800.0 764.0 C805.0 761.0 812.8 758.0 820.0 757.0 C827.2 756.0 835.3 755.8 843.0 758.0 C850.7 760.2 858.2 765.2 866.0 770.0 C873.8 774.8 880.2 780.3 890.0 787.0 C899.8 793.7 910.8 800.5 925.0 810.0 C939.2 819.5 966.7 838.3 975.0 844.0" fill="none" stroke="#c6393c" stroke-width="3"/>
<path d="M840.0 760.0 C838.0 762.5 831.7 768.3 828.0 775.0 C824.3 781.7 820.7 793.3 818.0 800.0 C815.3 806.7 813.0 812.5 812.0 815.0" fill="none" stroke="#9b1b21" stroke-width="1.6"/>
<path d="M757.0 812.0 C755.2 810.0 756.2 803.7 757.0 800.0 C757.8 796.3 759.5 793.2 762.0 790.0 C764.5 786.8 768.0 783.2 772.0 781.0 C776.0 778.8 781.3 777.2 786.0 777.0 C790.7 776.8 797.2 778.5 800.0 780.0 C802.8 781.5 803.8 784.3 803.0 786.0 C802.2 787.7 798.5 788.8 795.0 790.0 C791.5 791.2 785.8 791.3 782.0 793.0 C778.2 794.7 774.3 796.8 772.0 800.0 C769.7 803.2 770.5 810.0 768.0 812.0 C765.5 814.0 758.8 814.0 757.0 812.0Z" fill="#c5383b"/>
<path d="M756.0 811.0 C754.7 809.3 756.0 803.5 757.0 800.0 C758.0 796.5 760.5 792.2 762.0 790.0 C763.5 787.8 765.7 785.7 766.0 787.0 C766.3 788.3 764.2 794.2 764.0 798.0 C763.8 801.8 766.3 807.8 765.0 810.0 C763.7 812.2 757.3 812.7 756.0 811.0Z" fill="#dc5a52"/>
<circle cx="802.5" cy="791.5" r="1.6" fill="#3a0e10"/>
<path d="M1036.0 985.0 C1036.7 989.2 1039.0 1000.8 1040.0 1010.0 C1041.0 1019.2 1041.8 1030.0 1042.0 1040.0 C1042.2 1050.0 1041.5 1060.2 1041.0 1070.0 C1040.5 1079.8 1039.3 1094.2 1039.0 1099.0" fill="none" stroke="#b3252b" stroke-width="3" opacity="0.8"/>
<path d="M1028.0 975.0 C1029.0 979.2 1032.5 989.2 1034.0 1000.0 C1035.5 1010.8 1036.7 1028.3 1037.0 1040.0 C1037.3 1051.7 1036.5 1060.2 1036.0 1070.0 C1035.5 1079.8 1034.3 1094.2 1034.0 1099.0" fill="none" stroke="#86141a" stroke-width="2" opacity="0.6"/>
<path d="M999 918 L987 931 L982 945 L975 930 L985 915 Z" fill="#7d1115" opacity="0.8"/>
</g>
</svg>
<svg style="left:0;top:0" width="1326" height="1820" viewBox="0 0 1326 1820" shape-rendering="crispEdges">
<rect x="394" y="443" width="1" height="1181" fill="#a41cf0"/>
<rect x="453" y="443" width="1" height="1181" fill="#a41cf0"/>
<rect x="630" y="443" width="1" height="1181" fill="#a41cf0"/>
<rect x="689" y="443" width="1" height="1181" fill="#a41cf0"/>
<rect x="866" y="443" width="1" height="1181" fill="#a41cf0"/>
<rect x="925" y="443" width="1" height="1181" fill="#a41cf0"/>
<rect x="217" y="443" width="1" height="1182" fill="#c030f0"/><rect x="1102" y="443" width="1" height="1182" fill="#c030f0"/>
<rect x="217" y="443" width="886" height="1" fill="#ff3cff"/><rect x="217" y="1624" width="886" height="1" fill="#ff3cff"/>
<rect x="265" y="535" width="794" height="1" fill="#4a96e6"/><rect x="265" y="1404" width="794" height="1" fill="#4a96e6"/>
<rect x="265" y="535" width="1" height="870" fill="#4a96e6"/><rect x="1058" y="535" width="1" height="870" fill="#4a96e6"/>
<rect x="259" y="529" width="13" height="13" fill="#4a96e6"/><rect x="260" y="530" width="11" height="11" fill="#ffffff"/>
<rect x="656" y="529" width="13" height="13" fill="#4a96e6"/><rect x="657" y="530" width="11" height="11" fill="#ffffff"/>
<rect x="1052" y="529" width="13" height="13" fill="#4a96e6"/><rect x="1053" y="530" width="11" height="11" fill="#ffffff"/>
<rect x="259" y="964" width="13" height="13" fill="#4a96e6"/><rect x="260" y="965" width="11" height="11" fill="#ffffff"/>
<rect x="1052" y="964" width="13" height="13" fill="#4a96e6"/><rect x="1053" y="965" width="11" height="11" fill="#ffffff"/>
<rect x="259" y="1398" width="13" height="13" fill="#4a96e6"/><rect x="260" y="1399" width="11" height="11" fill="#ffffff"/>
<rect x="656" y="1398" width="13" height="13" fill="#4a96e6"/><rect x="657" y="1399" width="11" height="11" fill="#ffffff"/>
<rect x="1052" y="1398" width="13" height="13" fill="#4a96e6"/><rect x="1053" y="1399" width="11" height="11" fill="#ffffff"/>
<rect x="892" y="528" width="15" height="15" fill="#3f8ff0"/>
<rect x="1050" y="575" width="16" height="16" fill="#3f8ff0"/><rect x="1052" y="577" width="12" height="12" fill="#e27262"/>
</svg>
<svg style="left:276px;top:524px" width="36" height="20" viewBox="276 524 36 20"><g fill="none"><rect x="281.3" y="528.8" width="17.5" height="10.4" rx="5.2" stroke="#f2f2f2" stroke-width="5.6" fill="#f6f6f6"/><rect x="290.3" y="528.8" width="17.5" height="10.4" rx="5.2" stroke="#f2f2f2" stroke-width="5.6" fill="#f6f6f6"/><rect x="281.3" y="528.8" width="17.5" height="10.4" rx="5.2" stroke="#2c5d98" stroke-width="2.7"/><path d="M290.3 535.5 V534 A5.2 5.2 0 0 1 295.5 528.8 H302.6 A5.2 5.2 0 0 1 302.6 539.2 H295.5 A5.2 5.2 0 0 1 291.6 537.5" stroke="#f2f2f2" stroke-width="4.6"/><path d="M290.3 535.8 V534 A5.2 5.2 0 0 1 295.5 528.8 H302.6 A5.2 5.2 0 0 1 302.6 539.2 H295.5 A5.2 5.2 0 0 1 291.8 537.6" stroke="#2c5d98" stroke-width="2.7"/></g></svg>
<div class="abs" style="left:0;top:250px;width:1292px;height:30px;background:#f4f4f4"></div>
<div class="abs" style="left:0;top:280px;width:28px;height:1505px;background:#f4f4f4"></div>
<svg style="left:0;top:0" width="1326" height="1820" viewBox="0 0 1326 1820" shape-rendering="crispEdges">
<rect x="40" y="250" width="1" height="30" fill="#111"/>
<rect x="55" y="277" width="1" height="3" fill="#111"/>
<rect x="69" y="272" width="1" height="8" fill="#111"/>
<rect x="84" y="277" width="1" height="3" fill="#111"/>
<rect x="99" y="268" width="1" height="12" fill="#111"/>
<rect x="114" y="277" width="1" height="3" fill="#111"/>
<rect x="128" y="272" width="1" height="8" fill="#111"/>
<rect x="143" y="277" width="1" height="3" fill="#111"/>
<rect x="158" y="250" width="1" height="30" fill="#111"/>
<rect x="173" y="277" width="1" height="3" fill="#111"/>
<rect x="188" y="272" width="1" height="8" fill="#111"/>
<rect x="202" y="277" width="1" height="3" fill="#111"/>
<rect x="217" y="268" width="1" height="12" fill="#111"/>
<rect x="232" y="277" width="1" height="3" fill="#111"/>
<rect x="247" y="272" width="1" height="8" fill="#111"/>
<rect x="261" y="277" width="1" height="3" fill="#111"/>
<rect x="276" y="250" width="1" height="30" fill="#111"/>
<rect x="291" y="277" width="1" height="3" fill="#111"/>
<rect x="306" y="272" width="1" height="8" fill="#111"/>
<rect x="320" y="277" width="1" height="3" fill="#111"/>
<rect x="335" y="268" width="1" height="12" fill="#111"/>
<rect x="350" y="277" width="1" height="3" fill="#111"/>
<rect x="365" y="272" width="1" height="8" fill="#111"/>
<rect x="379" y="277" width="1" height="3" fill="#111"/>
<rect x="394" y="250" width="1" height="30" fill="#111"/>
<rect x="409" y="277" width="1" height="3" fill="#111"/>
<rect x="424" y="272" width="1" height="8" fill="#111"/>
<rect x="438" y="277" width="1" height="3" fill="#111"/>
<rect x="453" y="268" width="1" height="12" fill="#111"/>
<rect x="468" y="277" width="1" height="3" fill="#111"/>
<rect x="483" y="272" width="1" height="8" fill="#111"/>
<rect x="497" y="277" width="1" height="3" fill="#111"/>
<rect x="512" y="250" width="1" height="30" fill="#111"/>
<rect x="527" y="277" width="1" height="3" fill="#111"/>
<rect x="542" y="272" width="1" height="8" fill="#111"/>
<rect x="556" y="277" width="1" height="3" fill="#111"/>
<rect x="571" y="268" width="1" height="12" fill="#111"/>
<rect x="586" y="277" width="1" height="3" fill="#111"/>
<rect x="601" y="272" width="1" height="8" fill="#111"/>
<rect x="616" y="277" width="1" height="3" fill="#111"/>
<rect x="630" y="250" width="1" height="30" fill="#111"/>
<rect x="645" y="277" width="1" height="3" fill="#111"/>
<rect x="660" y="272" width="1" height="8" fill="#111"/>
<rect x="675" y="277" width="1" height="3" fill="#111"/>
<rect x="689" y="268" width="1" height="12" fill="#111"/>
<rect x="704" y="277" width="1" height="3" fill="#111"/>
<rect x="719" y="272" width="1" height="8" fill="#111"/>
<rect x="734" y="277" width="1" height="3" fill="#111"/>
<rect x="748" y="250" width="1" height="30" fill="#111"/>
<rect x="763" y="277" width="1" height="3" fill="#111"/>
<rect x="778" y="272" width="1" height="8" fill="#111"/>
<rect x="793" y="277" width="1" height="3" fill="#111"/>
<rect x="807" y="268" width="1" height="12" fill="#111"/>
<rect x="822" y="277" width="1" height="3" fill="#111"/>
<rect x="837" y="272" width="1" height="8" fill="#111"/>
<rect x="852" y="277" width="1" height="3" fill="#111"/>
<rect x="866" y="250" width="1" height="30" fill="#111"/>
<rect x="881" y="277" width="1" height="3" fill="#111"/>
<rect x="896" y="272" width="1" height="8" fill="#111"/>
<rect x="911" y="277" width="1" height="3" fill="#111"/>
<rect x="925" y="268" width="1" height="12" fill="#111"/>
<rect x="940" y="277" width="1" height="3" fill="#111"/>
<rect x="955" y="272" width="1" height="8" fill="#111"/>
<rect x="970" y="277" width="1" height="3" fill="#111"/>
<rect x="984" y="250" width="1" height="30" fill="#111"/>
<rect x="999" y="277" width="1" height="3" fill="#111"/>
<rect x="1014" y="272" width="1" height="8" fill="#111"/>
<rect x="1029" y="277" width="1" height="3" fill="#111"/>
<rect x="1044" y="268" width="1" height="12" fill="#111"/>
<rect x="1058" y="277" width="1" height="3" fill="#111"/>
<rect x="1073" y="272" width="1" height="8" fill="#111"/>
<rect x="1088" y="277" width="1" height="3" fill="#111"/>
<rect x="1103" y="250" width="1" height="30" fill="#111"/>
<rect x="1117" y="277" width="1" height="3" fill="#111"/>
<rect x="1132" y="272" width="1" height="8" fill="#111"/>
<rect x="1147" y="277" width="1" height="3" fill="#111"/>
<rect x="1162" y="268" width="1" height="12" fill="#111"/>
<rect x="1176" y="277" width="1" height="3" fill="#111"/>
<rect x="1191" y="272" width="1" height="8" fill="#111"/>
<rect x="1206" y="277" width="1" height="3" fill="#111"/>
<rect x="1221" y="250" width="1" height="30" fill="#111"/>
<rect x="1235" y="277" width="1" height="3" fill="#111"/>
<rect x="1250" y="272" width="1" height="8" fill="#111"/>
<rect x="1265" y="277" width="1" height="3" fill="#111"/>
<rect x="1280" y="268" width="1" height="12" fill="#111"/>
<rect x="20" y="296" width="8" height="1" fill="#111"/>
<rect x="25" y="311" width="3" height="1" fill="#111"/>
<rect x="16" y="325" width="12" height="1" fill="#111"/>
<rect x="25" y="340" width="3" height="1" fill="#111"/>
<rect x="20" y="355" width="8" height="1" fill="#111"/>
<rect x="25" y="370" width="3" height="1" fill="#111"/>
<rect x="0" y="384" width="28" height="1" fill="#111"/>
<rect x="25" y="399" width="3" height="1" fill="#111"/>
<rect x="20" y="414" width="8" height="1" fill="#111"/>
<rect x="25" y="429" width="3" height="1" fill="#111"/>
<rect x="16" y="444" width="12" height="1" fill="#111"/>
<rect x="25" y="458" width="3" height="1" fill="#111"/>
<rect x="20" y="473" width="8" height="1" fill="#111"/>
<rect x="25" y="488" width="3" height="1" fill="#111"/>
<rect x="0" y="503" width="28" height="1" fill="#111"/>
<rect x="25" y="517" width="3" height="1" fill="#111"/>
<rect x="20" y="532" width="8" height="1" fill="#111"/>
<rect x="25" y="547" width="3" height="1" fill="#111"/>
<rect x="16" y="562" width="12" height="1" fill="#111"/>
<rect x="25" y="576" width="3" height="1" fill="#111"/>
<rect x="20" y="591" width="8" height="1" fill="#111"/>
<rect x="25" y="606" width="3" height="1" fill="#111"/>
<rect x="0" y="621" width="28" height="1" fill="#111"/>
<rect x="25" y="635" width="3" height="1" fill="#111"/>
<rect x="20" y="650" width="8" height="1" fill="#111"/>
<rect x="25" y="665" width="3" height="1" fill="#111"/>
<rect x="16" y="680" width="12" height="1" fill="#111"/>
<rect x="25" y="694" width="3" height="1" fill="#111"/>
<rect x="20" y="709" width="8" height="1" fill="#111"/>
<rect x="25" y="724" width="3" height="1" fill="#111"/>
<rect x="0" y="739" width="28" height="1" fill="#111"/>
<rect x="25" y="753" width="3" height="1" fill="#111"/>
<rect x="20" y="768" width="8" height="1" fill="#111"/>
<rect x="25" y="783" width="3" height="1" fill="#111"/>
<rect x="16" y="798" width="12" height="1" fill="#111"/>
<rect x="25" y="813" width="3" height="1" fill="#111"/>
<rect x="20" y="827" width="8" height="1" fill="#111"/>
<rect x="25" y="842" width="3" height="1" fill="#111"/>
<rect x="0" y="857" width="28" height="1" fill="#111"/>
<rect x="25" y="872" width="3" height="1" fill="#111"/>
<rect x="20" y="886" width="8" height="1" fill="#111"/>
<rect x="25" y="901" width="3" height="1" fill="#111"/>
<rect x="16" y="916" width="12" height="1" fill="#111"/>
<rect x="25" y="931" width="3" height="1" fill="#111"/>
<rect x="20" y="945" width="8" height="1" fill="#111"/>
<rect x="25" y="960" width="3" height="1" fill="#111"/>
<rect x="0" y="975" width="28" height="1" fill="#111"/>
<rect x="25" y="990" width="3" height="1" fill="#111"/>
<rect x="20" y="1004" width="8" height="1" fill="#111"/>
<rect x="25" y="1019" width="3" height="1" fill="#111"/>
<rect x="16" y="1034" width="12" height="1" fill="#111"/>
<rect x="25" y="1049" width="3" height="1" fill="#111"/>
<rect x="20" y="1063" width="8" height="1" fill="#111"/>
<rect x="25" y="1078" width="3" height="1" fill="#111"/>
<rect x="0" y="1093" width="28" height="1" fill="#111"/>
<rect x="25" y="1108" width="3" height="1" fill="#111"/>
<rect x="20" y="1122" width="8" height="1" fill="#111"/>
<rect x="25" y="1137" width="3" height="1" fill="#111"/>
<rect x="16" y="1152" width="12" height="1" fill="#111"/>
<rect x="25" y="1167" width="3" height="1" fill="#111"/>
<rect x="20" y="1181" width="8" height="1" fill="#111"/>
<rect x="25" y="1196" width="3" height="1" fill="#111"/>
<rect x="0" y="1211" width="28" height="1" fill="#111"/>
<rect x="25" y="1226" width="3" height="1" fill="#111"/>
<rect x="20" y="1241" width="8" height="1" fill="#111"/>
<rect x="25" y="1255" width="3" height="1" fill="#111"/>
<rect x="16" y="1270" width="12" height="1" fill="#111"/>
<rect x="25" y="1285" width="3" height="1" fill="#111"/>
<rect x="20" y="1300" width="8" height="1" fill="#111"/>
<rect x="25" y="1314" width="3" height="1" fill="#111"/>
<rect x="0" y="1329" width="28" height="1" fill="#111"/>
<rect x="25" y="1344" width="3" height="1" fill="#111"/>
<rect x="20" y="1359" width="8" height="1" fill="#111"/>
<rect x="25" y="1373" width="3" height="1" fill="#111"/>
<rect x="16" y="1388" width="12" height="1" fill="#111"/>
<rect x="25" y="1403" width="3" height="1" fill="#111"/>
<rect x="20" y="1418" width="8" height="1" fill="#111"/>
<rect x="25" y="1432" width="3" height="1" fill="#111"/>
<rect x="0" y="1447" width="28" height="1" fill="#111"/>
<rect x="25" y="1462" width="3" height="1" fill="#111"/>
<rect x="20" y="1477" width="8" height="1" fill="#111"/>
<rect x="25" y="1491" width="3" height="1" fill="#111"/>
<rect x="16" y="1506" width="12" height="1" fill="#111"/>
<rect x="25" y="1521" width="3" height="1" fill="#111"/>
<rect x="20" y="1536" width="8" height="1" fill="#111"/>
<rect x="25" y="1550" width="3" height="1" fill="#111"/>
<rect x="0" y="1565" width="28" height="1" fill="#111"/>
<rect x="25" y="1580" width="3" height="1" fill="#111"/>
<rect x="20" y="1595" width="8" height="1" fill="#111"/>
<rect x="25" y="1609" width="3" height="1" fill="#111"/>
<rect x="16" y="1624" width="12" height="1" fill="#111"/>
<rect x="25" y="1639" width="3" height="1" fill="#111"/>
<rect x="20" y="1654" width="8" height="1" fill="#111"/>
<rect x="25" y="1669" width="3" height="1" fill="#111"/>
<rect x="0" y="1683" width="28" height="1" fill="#111"/>
<rect x="25" y="1698" width="3" height="1" fill="#111"/>
<rect x="20" y="1713" width="8" height="1" fill="#111"/>
<rect x="25" y="1728" width="3" height="1" fill="#111"/>
<rect x="16" y="1742" width="12" height="1" fill="#111"/>
<rect x="25" y="1757" width="3" height="1" fill="#111"/>
<rect x="20" y="1772" width="8" height="1" fill="#111"/>
<rect x="0" y="280" width="1292" height="2" fill="#0a0a0a"/>
<rect x="28" y="250" width="2" height="1535" fill="#0a0a0a"/>
<rect x="2" y="258" width="1" height="2" fill="#111"/>
<rect x="4" y="258" width="1" height="2" fill="#111"/>
<rect x="6" y="258" width="1" height="2" fill="#111"/>
<rect x="8" y="258" width="1" height="2" fill="#111"/>
<rect x="10" y="258" width="1" height="2" fill="#111"/>
<rect x="12" y="258" width="1" height="2" fill="#111"/>
<rect x="14" y="258" width="1" height="2" fill="#111"/>
<rect x="16" y="258" width="1" height="2" fill="#111"/>
<rect x="18" y="258" width="1" height="2" fill="#111"/>
<rect x="20" y="258" width="1" height="2" fill="#111"/>
<rect x="22" y="258" width="1" height="2" fill="#111"/>
<rect x="24" y="258" width="1" height="2" fill="#111"/>
<rect x="26" y="258" width="1" height="2" fill="#111"/>
<rect x="6" y="251" width="2" height="1" fill="#111"/>
<rect x="6" y="253" width="2" height="1" fill="#111"/>
<rect x="6" y="255" width="2" height="1" fill="#111"/>
<rect x="6" y="257" width="2" height="1" fill="#111"/>
<rect x="6" y="259" width="2" height="1" fill="#111"/>
<rect x="6" y="261" width="2" height="1" fill="#111"/>
<rect x="6" y="263" width="2" height="1" fill="#111"/>
<rect x="6" y="265" width="2" height="1" fill="#111"/>
<rect x="6" y="267" width="2" height="1" fill="#111"/>
<rect x="6" y="269" width="2" height="1" fill="#111"/>
<rect x="6" y="271" width="2" height="1" fill="#111"/>
<rect x="6" y="273" width="2" height="1" fill="#111"/>
<rect x="6" y="275" width="2" height="1" fill="#111"/>
<rect x="6" y="277" width="2" height="1" fill="#111"/>
<rect x="6" y="279" width="2" height="1" fill="#111"/>
</svg>
<div class="t" style="left:45px;top:253px;font-size:20px;color:#111">1</div>
<div class="t" style="left:163px;top:253px;font-size:20px;color:#111">0</div>
<div class="t" style="left:281px;top:253px;font-size:20px;color:#111">1</div>
<div class="t" style="left:399px;top:253px;font-size:20px;color:#111">2</div>
<div class="t" style="left:517px;top:253px;font-size:20px;color:#111">3</div>
<div class="t" style="left:635px;top:253px;font-size:20px;color:#111">4</div>
<div class="t" style="left:753px;top:253px;font-size:20px;color:#111">5</div>
<div class="t" style="left:871px;top:253px;font-size:20px;color:#111">6</div>
<div class="t" style="left:989px;top:253px;font-size:20px;color:#111">7</div>
<div class="t" style="left:1108px;top:253px;font-size:20px;color:#111">8</div>
<div class="t" style="left:1226px;top:253px;font-size:20px;color:#111">9</div>
<div class="t" style="left:3px;top:388px;font-size:20px;color:#111">0</div>
<div class="t" style="left:3px;top:507px;font-size:20px;color:#111">1</div>
<div class="t" style="left:3px;top:625px;font-size:20px;color:#111">2</div>
<div class="t" style="left:3px;top:743px;font-size:20px;color:#111">3</div>
<div class="t" style="left:3px;top:861px;font-size:20px;color:#111">4</div>
<div class="t" style="left:3px;top:979px;font-size:20px;color:#111">5</div>
<div class="t" style="left:3px;top:1097px;font-size:20px;color:#111">6</div>
<div class="t" style="left:3px;top:1215px;font-size:20px;color:#111">7</div>
<div class="t" style="left:3px;top:1333px;font-size:20px;color:#111">8</div>
<div class="t" style="left:3px;top:1451px;font-size:20px;color:#111">9</div>
<div class="t" style="left:3px;top:1569px;font-size:20px;color:#111">1</div>
<div class="t" style="left:3px;top:1587.5px;font-size:20px;color:#111">0</div>
<div class="t" style="left:3px;top:1687px;font-size:20px;color:#111">1</div>
<div class="t" style="left:3px;top:1705.5px;font-size:20px;color:#111">1</div>
<div class="abs" style="left:0;top:282px;width:28px;height:8px;overflow:hidden"><div class="t" style="left:3px;top:-10px;font-size:20px;color:#111">1</div></div>
<div class="abs" style="left:1292px;top:249px;width:31px;height:1536px;background:#e0e0e0"></div>
<div class="abs" style="left:1294px;top:396px;width:29px;height:1244px;background:#999999;border-radius:14px"></div>
<div class="abs" style="left:0;top:1785px;width:1323px;height:35px;background:#b9b9b9"></div>
<div class="abs" style="left:0;top:1818px;width:1323px;height:2px;background:#939191"></div>
<div class="t" id="zoomv" style="left:25px;top:1793.4px;font-size:19.6px;letter-spacing:1.1px;color:#333">44.73%</div>
<svg style="left:0;top:0" width="10" height="10"><path d="M112.5 1798.5 l6.5 6 l6.5 -6" fill="none" stroke="#222" stroke-width="2"/></svg>
<svg style="left:0;top:0" width="10" height="10"><rect x="152" y="1795" width="3.6" height="16" fill="#8d8d8d"/><path d="M168.7 1795 L158 1803 L168.7 1811 Z" fill="#8d8d8d"/><path d="M205.3 1795 L195.8 1803 L205.3 1811 Z" fill="#8d8d8d"/><path d="M439 1795 L448.4 1803 L439 1811 Z" fill="#8d8d8d"/><path d="M476.3 1795 L485.6 1803 L476.3 1811 Z" fill="#8d8d8d"/><rect x="487.4" y="1795" width="3.8" height="16" fill="#8d8d8d"/></svg>
<div class="abs" style="left:232px;top:1786px;width:180px;height:33px;border:2px solid #8e8e8e;border-radius:7px;background:#e1e1e1;overflow:hidden"><div class="abs" style="right:0;top:0;width:37px;height:100%;background:#b9b9b9;border-left:2px solid #8e8e8e"></div><div class="t" style="left:8px;top:4.4px;font-size:20.6px;color:#111">1</div></div>
<svg style="left:0;top:0" width="10" height="10"><path d="M386.2 1798 l6.5 6 l6.5 -6" fill="none" stroke="#151515" stroke-width="2"/></svg>
<svg style="left:0;top:0" width="10" height="10"><circle cx="539" cy="1800.6" r="12.3" fill="#3d3d3d"/><path d="M535 1796 L544 1796 L549.5 1801.5 L549.5 1814 L535 1814 Z" fill="#b9b9b9"/><path d="M543 1796 L543 1803 L549.5 1803" fill="none" stroke="#3d3d3d" stroke-width="1.6"/><path d="M553.5 1810.5 L561.5 1810.5 L557.5 1814.5 Z" fill="#3d3d3d"/></svg>
<div class="t" id="basic" style="left:590px;top:1792.6px;font-size:20.6px;letter-spacing:0.5px;color:#333">[Basic] (working)</div>
<svg style="left:0;top:0" width="10" height="10"><path d="M795.5 1798.5 l6.5 6 l6.5 -6" fill="none" stroke="#222" stroke-width="2"/></svg>
<div class="abs" style="left:842px;top:1791px;width:21px;height:21px;border-radius:50%;background:#3cb54a"></div>
<div class="t" id="noerr" style="left:874px;top:1792.6px;font-size:20.6px;letter-spacing:0.6px;color:#1d1d1d">No errors</div>
<svg style="left:0;top:0" width="10" height="10"><path d="M1000.5 1798.5 l6.5 6 l6.5 -6" fill="none" stroke="#222" stroke-width="2"/></svg>
<div class="abs" style="left:1026px;top:1785px;width:222px;height:32px;background:#e0e0e0"></div>
<div class="abs" style="left:1094px;top:1787px;width:88px;height:29px;background:#999999;border-radius:14.5px"></div>
<svg style="left:0;top:0" width="10" height="10"><rect x="1258" y="1791" width="28" height="21" fill="none" stroke="#333" stroke-width="2"/><path d="M1272 1791 V1812" stroke="#333" stroke-width="2"/></svg>
<svg style="left:0;top:0" width="10" height="10"><rect x="1300" y="1812" width="2" height="2" fill="#8f8f8f"/><rect x="1304" y="1808" width="2" height="2" fill="#8f8f8f"/><rect x="1304" y="1812" width="2" height="2" fill="#8f8f8f"/><rect x="1308" y="1804" width="2" height="2" fill="#8f8f8f"/><rect x="1308" y="1808" width="2" height="2" fill="#8f8f8f"/><rect x="1308" y="1812" width="2" height="2" fill="#8f8f8f"/><rect x="1312" y="1800" width="2" height="2" fill="#8f8f8f"/><rect x="1312" y="1804" width="2" height="2" fill="#8f8f8f"/><rect x="1312" y="1808" width="2" height="2" fill="#8f8f8f"/><rect x="1312" y="1812" width="2" height="2" fill="#8f8f8f"/><rect x="1316" y="1796" width="2" height="2" fill="#8f8f8f"/><rect x="1316" y="1800" width="2" height="2" fill="#8f8f8f"/><rect x="1316" y="1804" width="2" height="2" fill="#8f8f8f"/><rect x="1316" y="1808" width="2" height="2" fill="#8f8f8f"/><rect x="1316" y="1812" width="2" height="2" fill="#8f8f8f"/></svg>
</div>
</body></html>
